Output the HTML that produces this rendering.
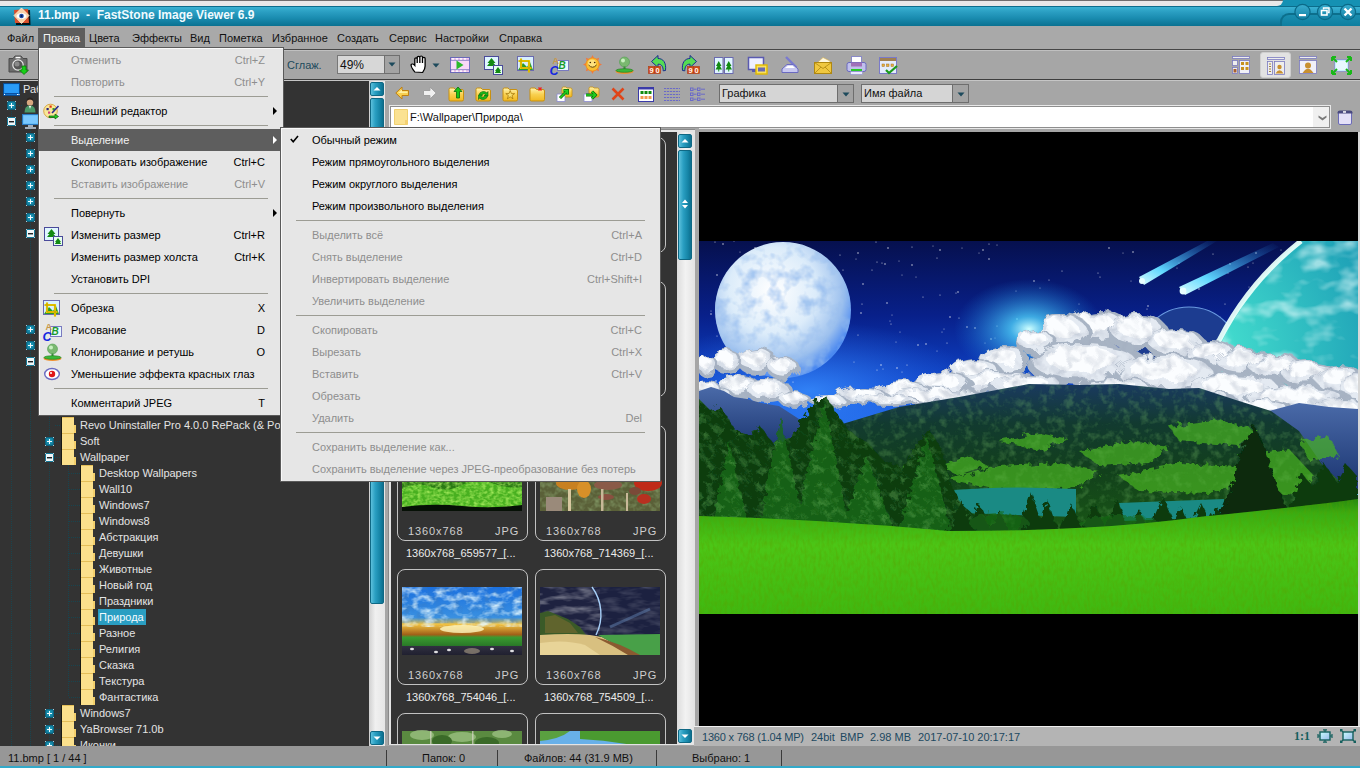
<!DOCTYPE html>
<html><head><meta charset="utf-8">
<style>
*{box-sizing:border-box}
html,body{margin:0;padding:0}
body{width:1360px;height:768px;position:relative;overflow:hidden;background:#a5a5a5;font-family:"Liberation Sans",sans-serif;font-size:11px;color:#000}
.a{position:absolute}
.t{position:absolute;white-space:nowrap;line-height:13px}
svg{position:absolute;overflow:visible}
.tr{position:absolute;color:#e2e2e2;white-space:nowrap;line-height:13px}
.dis{color:#8f8f8f}

</style></head>
<body>
<div class="a" style="left:0px;top:0px;width:1360px;height:7px;background:#1591b3"></div>
<div class="a" style="left:0px;top:0px;width:1283px;height:6px;background:#e8e8e8;border-top:1px solid #6e6e6e;border-bottom-right-radius:7px"></div>
<div class="a" style="left:0px;top:6px;width:1360px;height:20px;background:linear-gradient(#0b6d8c 0,#0b6d8c 1px,#3ab2d2 1px,#2a9ec2 30%,#1a8cb0 60%,#0a7191)"></div>
<div class="a" style="left:1280px;top:13px;width:100px;height:16px;border-radius:9px 0 0 0;background:linear-gradient(#1a8eb0,#0b7a9a);border-top:2px solid #0c6f8c;border-left:2px solid #0c6f8c"></div>
<svg style="left:13px;top:8px" width="17" height="16" viewBox="0 0 17 16">
<path d="M3 3 L17 2 L17.5 17 L3 17Z" fill="#000" opacity=".85"/>
<path d="M1 2 L15 1 L16 15 L2 15Z" fill="#d8502c"/>
<path d="M8.5 0 L16 7.5 L8.5 15.5 L1 7.5Z" fill="#f6d2a8" stroke="#fff2d8" stroke-width=".8"/>
<ellipse cx="8.5" cy="8" rx="5" ry="3" fill="#fff"/>
<circle cx="8.5" cy="8" r="2.3" fill="#1a4aa8"/>
<circle cx="8.5" cy="8" r="1" fill="#061a50"/>
</svg>
<div class="t" style="left:38px;top:7px;font-weight:bold;font-size:12px;line-height:16px;color:#f0fbff">11.bmp&nbsp;&nbsp;-&nbsp;&nbsp;FastStone Image Viewer 6.9</div>
<svg style="left:1290px;top:0px" width="70" height="22" viewBox="0 0 70 22"><defs><linearGradient id="wbg" x1="0" y1="0" x2="0" y2="1"><stop offset="0" stop-color="#3aaed0"/><stop offset="1" stop-color="#137fa2"/></linearGradient></defs><circle cx="12.5" cy="12" r="7.6" fill="url(#wbg)" stroke="#0b6a88" stroke-width="1.2"/><rect x="9" y="14" width="7" height="2.2" fill="#fff"/><circle cx="35" cy="12" r="7.6" fill="url(#wbg)" stroke="#0b6a88" stroke-width="1.2"/><rect x="31.5" y="10.5" width="5.5" height="4.5" fill="none" stroke="#fff" stroke-width="1.6"/><path d="M33.5 9.5 V8 H39 V12.5 H38" fill="none" stroke="#fff" stroke-width="1.4"/><circle cx="58" cy="12" r="7.6" fill="url(#wbg)" stroke="#0b6a88" stroke-width="1.2"/><path d="M54.5 8.5 L61.5 15.5 M61.5 8.5 L54.5 15.5" stroke="#fff" stroke-width="2.4"/></svg>
<div class="a" style="left:0px;top:26px;width:1360px;height:23px;background:#a9a9a9"></div>
<div class="a" style="left:38px;top:28px;width:47px;height:20px;background:#5d5d5d"></div>
<div class="t" style="left:7px;top:32px;color:#111">Файл</div>
<div class="t" style="left:43px;top:32px;color:#f4f4f4">Правка</div>
<div class="t" style="left:89px;top:32px;color:#111">Цвета</div>
<div class="t" style="left:132px;top:32px;color:#111">Эффекты</div>
<div class="t" style="left:190px;top:32px;color:#111">Вид</div>
<div class="t" style="left:219px;top:32px;color:#111">Пометка</div>
<div class="t" style="left:272px;top:32px;color:#111">Избранное</div>
<div class="t" style="left:337px;top:32px;color:#111">Создать</div>
<div class="t" style="left:389px;top:32px;color:#111">Сервис</div>
<div class="t" style="left:435px;top:32px;color:#111">Настройки</div>
<div class="t" style="left:499px;top:32px;color:#111">Справка</div>
<div class="a" style="left:0px;top:49px;width:1360px;height:1px;background:#464646"></div>
<div class="a" style="left:0px;top:50px;width:1360px;height:1px;background:#c0c0c0"></div>
<div class="a" style="left:0px;top:51px;width:1360px;height:28px;background:#a6a6a6"></div>
<div class="a" style="left:0px;top:79px;width:1360px;height:1px;background:#3e3e3e"></div>
<div class="a" style="left:0px;top:80px;width:1360px;height:1px;background:#c6c6c6"></div>
<svg style="left:8px;top:55px" width="22" height="20" viewBox="0 0 22 20">
<path d="M1 3.5 H5 L7 1 H13 L15 3.5 H19 V17 H1Z" fill="#6b6b6b" stroke="#4a4a4a" stroke-width="1"/>
<rect x="7.5" y="1.8" width="5" height="1.5" fill="#fff"/>
<circle cx="10" cy="10" r="5.2" fill="#555" stroke="#e8e8e8" stroke-width="1.2"/>
<circle cx="9" cy="9" r="2.5" fill="#8a8a8a"/>
<path d="M14 11 H18 V15 H20.5 L16 19.5 L11.5 15 H14Z" fill="#16d016" stroke="#0a7a0a" stroke-width=".8"/>
</svg>
<div class="t" style="left:287px;top:59px;color:#1d4a5c">Сглаж.</div>
<div class="a" style="left:337px;top:55px;width:48px;height:19px;background:#d7d7d7;border:1px solid #777;border-right:none"></div>
<div class="a" style="left:384px;top:55px;width:16px;height:19px;background:#a3a3a3;border:1px solid #6f6f6f"></div>
<svg style="left:388px;top:62px" width="8" height="5" viewBox="0 0 8 5"><path d="M0.5 0.5 H7.5 L4 4.5Z" fill="#1d4a5c"/></svg>
<div class="t" style="left:340px;top:59px;color:#111;font-size:12px">49%</div>
<svg style="left:410px;top:55px" width="18" height="19" viewBox="0 0 18 19">
<path transform="scale(1.2,1)" d="M4 17 C2 14 0.5 11 1 9.5 C1.5 8.5 3 9 4 10.5 V4 C4 2.5 6 2.5 6 4 V8 V2.5 C6 1 8.2 1 8.2 2.5 V8 V2 C8.2 0.6 10.4 0.6 10.4 2 V8 V3.5 C10.4 2 12.6 2 12.6 3.5 V11 C12.6 14 11.5 16 10.5 17.5Z" fill="#fff" stroke="#000" stroke-width="1.1"/>
</svg>
<svg style="left:432px;top:63px" width="8" height="5" viewBox="0 0 8 5"><path d="M0.5 0.5 H7.5 L4 4.5Z" fill="#1d4a5c"/></svg>
<svg style="left:450px;top:57px" width="20" height="16" viewBox="0 0 20 16">
<rect x="0.5" y="0.5" width="19" height="15" fill="#f2c8f0" stroke="#6a6ab8"/>
<rect x="0.5" y="3.2" width="19" height="9.6" fill="#f8d8f8" stroke="#6a6ab8" stroke-width=".8"/>
<g fill="#fff"><rect x="2" y="1.2" width="2" height="1.4"/><rect x="6" y="1.2" width="2" height="1.4"/><rect x="10" y="1.2" width="2" height="1.4"/><rect x="14" y="1.2" width="2" height="1.4"/>
<rect x="2" y="13.4" width="2" height="1.4"/><rect x="6" y="13.4" width="2" height="1.4"/><rect x="10" y="13.4" width="2" height="1.4"/><rect x="14" y="13.4" width="2" height="1.4"/></g>
<path d="M6.5 3.5 L13.5 8 L6.5 12.5Z" fill="#2cb82c"/>
</svg>
<svg style="left:484px;top:56px" width="19" height="19" viewBox="0 0 19 19">
<rect x="0.5" y="0.5" width="14" height="13" fill="#e0f6ff" stroke="#4a4a9a"/>
<path d="M7.5 2 L11.5 7 H9.5 L12 10 H3 L5.5 7 H3.5Z" fill="#128a12"/>
<rect x="9.5" y="9.5" width="9" height="9" fill="#e8fff0" stroke="#4a4a9a"/>
<path d="M14 11 L17 15 H15.8 L17.2 17 H10.8 L12.2 15 H11Z" fill="#128a12"/>
</svg>
<svg style="left:517px;top:56px" width="19" height="19" viewBox="0 0 19 19">
<rect x="0.5" y="0.5" width="16" height="14" fill="#d8f0ff" stroke="#6a6ab0"/>
<path d="M1 14 L6 7 L10 11 L13 6 L16 14Z" fill="#2a9a2a"/>
<path d="M4 2.5 V12 H14.5 M1.5 5 H12 V16.5" fill="none" stroke="#f0d000" stroke-width="2.2"/>
<path d="M4 2.5 V12 H14.5 M1.5 5 H12 V16.5" fill="none" stroke="#a08000" stroke-width=".5"/>
</svg>
<svg style="left:550px;top:56px" width="19" height="19" viewBox="0 0 19 19">
<rect x="7.5" y="4.5" width="11" height="10" fill="#e8f8ff" stroke="#7a7ac0"/>
<text x="8.6" y="13.2" font-family="Liberation Sans" font-weight="bold" font-style="italic" font-size="10" fill="#1a9a2a">B</text>
<text x="2.5" y="8" font-family="Liberation Sans" font-weight="bold" font-size="9" fill="#c89848">A</text>
<text x="-0.5" y="18.5" font-family="Liberation Sans" font-weight="bold" font-style="italic" font-size="12.5" fill="#1428e0">C</text>
</svg>
<svg style="left:583px;top:55px" width="19" height="19" viewBox="0 0 19 19">
<g fill="#f07840"><path d="M9.5 0 L11.5 4 L7.5 4Z"/><path d="M9.5 19 L11.5 15 L7.5 15Z"/><path d="M0 9.5 L4 7.5 L4 11.5Z"/><path d="M19 9.5 L15 7.5 L15 11.5Z"/>
<path d="M2.8 2.8 L7 4.2 L4.2 7Z"/><path d="M16.2 2.8 L12 4.2 L14.8 7Z"/><path d="M2.8 16.2 L7 14.8 L4.2 12Z"/><path d="M16.2 16.2 L12 14.8 L14.8 12Z"/></g>
<circle cx="9.5" cy="9.5" r="6.6" fill="#f8c030" stroke="#f09020" stroke-width="1"/>
<circle cx="9" cy="8.5" r="4" fill="#fff0a0" opacity=".7"/>
<circle cx="7.3" cy="7.5" r=".8" fill="#402000"/><circle cx="11.7" cy="7.5" r=".8" fill="#402000"/>
<path d="M5.5 10 Q9.5 14.5 13.5 10" fill="none" stroke="#604000" stroke-width="1"/>
</svg>
<svg style="left:615px;top:56px" width="19" height="19" viewBox="0 0 19 19">
<circle cx="9.5" cy="6" r="5" fill="#7ab870" stroke="#50a050" stroke-width=".6"/>
<circle cx="8" cy="4.5" r="2" fill="#c8f0c0"/>
<rect x="8.5" y="10.5" width="2" height="3" fill="#3a8a3a"/>
<ellipse cx="9.5" cy="15.5" rx="9" ry="2.4" fill="#f09030"/>
<ellipse cx="9.5" cy="14.5" rx="8.5" ry="1.8" fill="#3ab83a" stroke="#1a7a1a" stroke-width=".6"/>
</svg>
<svg style="left:648px;top:55px" width="20" height="20" viewBox="0 0 20 20"><path d="M3.5 6.5 L10 0.5 V3.5 C15 3.5 18.5 7.5 17.5 15.5 L15.2 15.8 C15.2 11.5 13.5 9 10 9.2 V12.5Z" fill="#54dc54" stroke="#1a2a90" stroke-width="1"/><rect x="0.5" y="11.5" width="6" height="7" fill="#d04a18" stroke="#b03a10" stroke-width=".6"/><rect x="6.5" y="11.5" width="6" height="7" fill="#d04a18" stroke="#b03a10" stroke-width=".6"/><text x="1.5" y="17.8" font-family="Liberation Sans" font-weight="bold" font-size="7.5" fill="#fff8f0">9</text><text x="7.5" y="17.8" font-family="Liberation Sans" font-weight="bold" font-size="7.5" fill="#fff8f0">0</text></svg>
<svg style="left:680px;top:55px" width="20" height="20" viewBox="0 0 20 20"><g transform="translate(20,0) scale(-1,1)"><path d="M3.5 6.5 L10 0.5 V3.5 C15 3.5 18.5 7.5 17.5 15.5 L15.2 15.8 C15.2 11.5 13.5 9 10 9.2 V12.5Z" fill="#54dc54" stroke="#1a2a90" stroke-width="1"/></g><rect x="7.5" y="11.5" width="6" height="7" fill="#d04a18" stroke="#b03a10" stroke-width=".6"/><rect x="13.5" y="11.5" width="6" height="7" fill="#d04a18" stroke="#b03a10" stroke-width=".6"/><text x="8.5" y="17.8" font-family="Liberation Sans" font-weight="bold" font-size="7.5" fill="#fff8f0">9</text><text x="14.5" y="17.8" font-family="Liberation Sans" font-weight="bold" font-size="7.5" fill="#fff8f0">0</text></svg>
<svg style="left:714px;top:57px" width="20" height="17" viewBox="0 0 20 17">
<rect x="0.5" y="0.5" width="8.5" height="16" fill="#e0f4ff" stroke="#6a6ab0"/>
<rect x="10.5" y="0.5" width="8.5" height="16" fill="#e0f4ff" stroke="#6a6ab0"/>
<path d="M4.75 4 L7.5 9 H6 L8 12.5 H1.5 L3.5 9 H2Z M4.3 12 H5.2 V14.5 H4.3Z" fill="#128a12"/>
<path d="M14.75 4 L17.5 9 H16 L18 12.5 H11.5 L13.5 9 H12Z M14.3 12 H15.2 V14.5 H14.3Z" fill="#128a12"/>
</svg>
<svg style="left:748px;top:57px" width="20" height="18" viewBox="0 0 20 18">
<rect x="0.5" y="0.5" width="15" height="12" fill="#eef0ff" stroke="#5a5ab0" stroke-width="1.5"/>
<rect x="4" y="13" width="8" height="2" fill="#5a5ab0"/>
<rect x="8" y="8" width="11" height="9" fill="#f8e060" stroke="#e0b800" stroke-width="1.4"/>
<rect x="10" y="10.5" width="7" height="4" fill="#6a6ab0"/>
</svg>
<svg style="left:781px;top:56px" width="19" height="19" viewBox="0 0 19 19">
<path d="M5 1 L15.5 11.5" stroke="#7a7ad0" stroke-width="2.4"/>
<path d="M1 13 L6 8.5 H12 L17 13 V16.5 H1Z" fill="#c8c8f0" stroke="#6a6ac0"/>
<path d="M4 12 L7 9.8 H11.5 L14 12Z" fill="#fff"/>
</svg>
<svg style="left:814px;top:56px" width="19" height="19" viewBox="0 0 19 19">
<path d="M3 7 L9 1.5 L16 5 L16 9Z" fill="#fff8e0" stroke="#d8b040" stroke-width=".6"/>
<rect x="0.5" y="6.5" width="17" height="11" fill="#f0c840" stroke="#b08810"/>
<path d="M0.5 6.5 L9 12.5 L17.5 6.5 M0.5 17.5 L7 11 M17.5 17.5 L11 11" fill="none" stroke="#b08810" stroke-width=".8"/>
</svg>
<svg style="left:846px;top:56px" width="21" height="19" viewBox="0 0 21 19">
<rect x="5.5" y="0.5" width="10" height="6" fill="#fff" stroke="#8a8ac8"/>
<rect x="1" y="6.5" width="19" height="9" rx="2" fill="#c0c0ec" stroke="#6a6ac0"/>
<rect x="5" y="6.5" width="11" height="4" fill="#a070b8"/>
<rect x="5" y="13" width="11" height="2" fill="#28c828"/>
<rect x="4.5" y="15.5" width="12" height="3" fill="#e8e8ff" stroke="#8a8ac8" stroke-width=".6"/>
</svg>
<svg style="left:879px;top:57px" width="19" height="18" viewBox="0 0 19 18">
<rect x="0.5" y="0.5" width="17" height="16" fill="#e4ecfc" stroke="#7a7ac8"/>
<rect x="1" y="1" width="16" height="3" fill="#a08050"/>
<rect x="3" y="7" width="2.5" height="2.5" fill="#e8b040" stroke="#a07020" stroke-width=".5"/>
<rect x="7.5" y="7" width="2.5" height="2.5" fill="#e8b040" stroke="#a07020" stroke-width=".5"/>
<rect x="12" y="7" width="2.5" height="2.5" fill="#e8b040" stroke="#a07020" stroke-width=".5"/>
<path d="M7 13 L10 16 L18 9" fill="none" stroke="#1a9a1a" stroke-width="2.2"/>
</svg>
<svg style="left:1232px;top:56px" width="19" height="19" viewBox="0 0 19 19">
<rect x="0.5" y="0.5" width="17" height="2" fill="#eee" stroke="#7a7ac0" stroke-width=".8"/>
<rect x="0.5" y="4.5" width="5" height="5" fill="#eee" stroke="#7a7ac0" stroke-width=".8"/>
<rect x="0.5" y="11.5" width="5" height="6" fill="#eee" stroke="#7a7ac0" stroke-width=".8"/>
<rect x="1.5" y="13" width="3" height="3.5" fill="#a86030"/>
<rect x="7.5" y="4.5" width="10" height="13" fill="#f0f0f8" stroke="#7a7ac0" stroke-width=".8"/>
<rect x="9" y="6" width="3" height="3" fill="#c89020"/><rect x="13.5" y="6" width="3" height="3" fill="#c89020"/>
<rect x="9" y="11" width="3" height="3" fill="#c89020"/><rect x="13.5" y="11" width="3" height="3" fill="#c89020"/>
</svg>
<div class="a" style="left:1260px;top:52px;width:31px;height:26px;background:#e2e2e2;border-radius:3px;border:1px solid #cfcfcf"></div>
<svg style="left:1267px;top:57px" width="19" height="18" viewBox="0 0 19 18">
<rect x="0.5" y="0.5" width="17" height="2" fill="#eee" stroke="#7a7ac0" stroke-width=".8"/>
<rect x="0.5" y="4.5" width="5" height="13" fill="#eee" stroke="#7a7ac0" stroke-width=".8"/>
<path d="M2 7 H4 M2 9.5 H4 M2 12 H4 M2 14.5 H4" stroke="#a08040" stroke-width="1"/>
<rect x="7.5" y="4.5" width="10" height="13" fill="#eee" stroke="#7a7ac0" stroke-width=".8"/>
<circle cx="12.5" cy="10" r="2.2" fill="#c89030"/><path d="M8.5 16.5 Q12.5 10 16.5 16.5Z" fill="#c89030"/>
</svg>
<svg style="left:1299px;top:56px" width="19" height="19" viewBox="0 0 19 19">
<rect x="0.5" y="0.5" width="17" height="2" fill="#eee" stroke="#7a7ac0" stroke-width=".8"/>
<rect x="0.5" y="4.5" width="17" height="13" fill="#f0f0f8" stroke="#7a7ac0" stroke-width=".8"/>
<circle cx="9" cy="9.5" r="3" fill="#c89030"/><path d="M3.5 17 Q9 8.5 14.5 17Z" fill="#c89030"/>
</svg>
<svg style="left:1331px;top:56px" width="21" height="19" viewBox="0 0 21 19">
<rect x="3.5" y="3.5" width="14" height="12" fill="#c8ecff" stroke="#7a7ac0" stroke-width=".6"/>
<rect x="5" y="5" width="11" height="9" fill="#e8f8ff"/>
<path d="M1 1 L6 6 M1 1 H5 M1 1 V5 M20 1 L15 6 M20 1 H16 M20 1 V5 M1 18 L6 13 M1 18 H5 M1 18 V14 M20 18 L15 13 M20 18 H16 M20 18 V14" stroke="#18b818" stroke-width="2"/>
</svg>
<div class="a" style="left:0px;top:81px;width:369px;height:665px;background:#333333"></div>
<div class="a" style="left:0;top:81px;width:369px;height:665px;overflow:hidden"><div class="a" style="left:0;top:-81px;width:369px;height:768px"><div class="a" style="left:11px;top:97px;width:1px;height:649px;background:repeating-linear-gradient(180deg,#174550 0 1px,transparent 1px 2px)"></div>
<div class="a" style="left:30px;top:129px;width:1px;height:617px;background:repeating-linear-gradient(180deg,#174550 0 1px,transparent 1px 2px)"></div>
<div class="a" style="left:49px;top:377px;width:1px;height:369px;background:repeating-linear-gradient(180deg,#174550 0 1px,transparent 1px 2px)"></div>
<div class="a" style="left:68px;top:465px;width:1px;height:232px;background:repeating-linear-gradient(180deg,#174550 0 1px,transparent 1px 2px)"></div>
<div class="a" style="left:17px;top:105px;width:6px;height:1px;background:repeating-linear-gradient(90deg,#174550 0 1px,transparent 1px 2px)"></div>
<div class="a" style="left:17px;top:121px;width:5px;height:1px;background:repeating-linear-gradient(90deg,#174550 0 1px,transparent 1px 2px)"></div>
<svg style="left:3px;top:83px" width="17" height="13" viewBox="0 0 17 13"><rect x="0.5" y="0.5" width="16" height="12" fill="#1e92f0" stroke="#0a4a90"/><rect x="1.5" y="1.5" width="14" height="9" fill="#2a9cf8"/><rect x="1.5" y="10" width="14" height="1.5" fill="#0a50a0"/><g fill="#fff"><rect x="1" y="11" width="1" height="1"/><rect x="14" y="11" width="1" height="1"/><rect x="15.5" y="11" width="1" height="1"/></g></svg>
<div class="tr" style="left:23px;top:83px;color:#e8e8e8">Рабочий стол</div>
<div class="a" style="left:7px;top:101px;width:9px;height:9px;background:radial-gradient(circle at 50% 45%,#22a6c6,#0e7594 70%,#0a5f7a);border-radius:1px;box-shadow:inset 0 0 0 .5px #0a4a60"></div>
<div class="a" style="left:9px;top:105px;width:5px;height:1px;background:#f0fbff"></div>
<div class="a" style="left:11px;top:103px;width:1px;height:5px;background:#f0fbff"></div>
<div class="a" style="left:7px;top:101px;width:1px;height:1px;background:#b8c8d0"></div>
<div class="a" style="left:15px;top:101px;width:1px;height:1px;background:#b8c8d0"></div>
<div class="a" style="left:7px;top:109px;width:1px;height:1px;background:#b8c8d0"></div>
<div class="a" style="left:15px;top:109px;width:1px;height:1px;background:#b8c8d0"></div>
<svg style="left:24px;top:97px" width="12" height="16" viewBox="0 0 12 16"><circle cx="6" cy="5.5" r="3.2" fill="#d8a880"/><path d="M2.6 4.5 Q2.5 0.5 6 0.5 Q9.5 0.5 9.4 4.5 Q8.5 2.5 6 2.6 Q3.5 2.5 2.6 4.5Z" fill="#2a2420"/><path d="M0.5 15.5 Q0.5 8.5 6 8.5 Q11.5 8.5 11.5 15.5Z" fill="#4a9a6a"/><path d="M5 9 L6 12 L7 9Z" fill="#fff"/></svg>
<div class="a" style="left:7px;top:117px;width:9px;height:9px;background:#f2f6f8;border:1px solid #157a98;border-radius:1px"></div>
<div class="a" style="left:9px;top:121px;width:5px;height:1px;background:#222"></div>
<div class="a" style="left:9px;top:122px;width:5px;height:1px;background:#8a9aa0"></div>
<div class="a" style="left:7px;top:117px;width:1px;height:1px;background:#b8c8d0"></div>
<div class="a" style="left:15px;top:117px;width:1px;height:1px;background:#b8c8d0"></div>
<div class="a" style="left:7px;top:125px;width:1px;height:1px;background:#b8c8d0"></div>
<div class="a" style="left:15px;top:125px;width:1px;height:1px;background:#b8c8d0"></div>
<svg style="left:22px;top:114px" width="17" height="15" viewBox="0 0 17 15"><rect x="0.5" y="0.5" width="16" height="10" fill="#58b8f0" stroke="#2a78c0"/><rect x="1.5" y="1.5" width="14" height="8" fill="#7ac8ff"/><path d="M6 12 H11 M3 14 H14" stroke="#c8d8e8" stroke-width="1.4"/></svg>
<div class="a" style="left:26px;top:133px;width:9px;height:9px;background:radial-gradient(circle at 50% 45%,#22a6c6,#0e7594 70%,#0a5f7a);border-radius:1px;box-shadow:inset 0 0 0 .5px #0a4a60"></div>
<div class="a" style="left:28px;top:137px;width:5px;height:1px;background:#f0fbff"></div>
<div class="a" style="left:30px;top:135px;width:1px;height:5px;background:#f0fbff"></div>
<div class="a" style="left:26px;top:133px;width:1px;height:1px;background:#b8c8d0"></div>
<div class="a" style="left:34px;top:133px;width:1px;height:1px;background:#b8c8d0"></div>
<div class="a" style="left:26px;top:141px;width:1px;height:1px;background:#b8c8d0"></div>
<div class="a" style="left:34px;top:141px;width:1px;height:1px;background:#b8c8d0"></div>
<div class="a" style="left:26px;top:149px;width:9px;height:9px;background:radial-gradient(circle at 50% 45%,#22a6c6,#0e7594 70%,#0a5f7a);border-radius:1px;box-shadow:inset 0 0 0 .5px #0a4a60"></div>
<div class="a" style="left:28px;top:153px;width:5px;height:1px;background:#f0fbff"></div>
<div class="a" style="left:30px;top:151px;width:1px;height:5px;background:#f0fbff"></div>
<div class="a" style="left:26px;top:149px;width:1px;height:1px;background:#b8c8d0"></div>
<div class="a" style="left:34px;top:149px;width:1px;height:1px;background:#b8c8d0"></div>
<div class="a" style="left:26px;top:157px;width:1px;height:1px;background:#b8c8d0"></div>
<div class="a" style="left:34px;top:157px;width:1px;height:1px;background:#b8c8d0"></div>
<div class="a" style="left:26px;top:165px;width:9px;height:9px;background:radial-gradient(circle at 50% 45%,#22a6c6,#0e7594 70%,#0a5f7a);border-radius:1px;box-shadow:inset 0 0 0 .5px #0a4a60"></div>
<div class="a" style="left:28px;top:169px;width:5px;height:1px;background:#f0fbff"></div>
<div class="a" style="left:30px;top:167px;width:1px;height:5px;background:#f0fbff"></div>
<div class="a" style="left:26px;top:165px;width:1px;height:1px;background:#b8c8d0"></div>
<div class="a" style="left:34px;top:165px;width:1px;height:1px;background:#b8c8d0"></div>
<div class="a" style="left:26px;top:173px;width:1px;height:1px;background:#b8c8d0"></div>
<div class="a" style="left:34px;top:173px;width:1px;height:1px;background:#b8c8d0"></div>
<div class="a" style="left:26px;top:181px;width:9px;height:9px;background:radial-gradient(circle at 50% 45%,#22a6c6,#0e7594 70%,#0a5f7a);border-radius:1px;box-shadow:inset 0 0 0 .5px #0a4a60"></div>
<div class="a" style="left:28px;top:185px;width:5px;height:1px;background:#f0fbff"></div>
<div class="a" style="left:30px;top:183px;width:1px;height:5px;background:#f0fbff"></div>
<div class="a" style="left:26px;top:181px;width:1px;height:1px;background:#b8c8d0"></div>
<div class="a" style="left:34px;top:181px;width:1px;height:1px;background:#b8c8d0"></div>
<div class="a" style="left:26px;top:189px;width:1px;height:1px;background:#b8c8d0"></div>
<div class="a" style="left:34px;top:189px;width:1px;height:1px;background:#b8c8d0"></div>
<div class="a" style="left:26px;top:197px;width:9px;height:9px;background:radial-gradient(circle at 50% 45%,#22a6c6,#0e7594 70%,#0a5f7a);border-radius:1px;box-shadow:inset 0 0 0 .5px #0a4a60"></div>
<div class="a" style="left:28px;top:201px;width:5px;height:1px;background:#f0fbff"></div>
<div class="a" style="left:30px;top:199px;width:1px;height:5px;background:#f0fbff"></div>
<div class="a" style="left:26px;top:197px;width:1px;height:1px;background:#b8c8d0"></div>
<div class="a" style="left:34px;top:197px;width:1px;height:1px;background:#b8c8d0"></div>
<div class="a" style="left:26px;top:205px;width:1px;height:1px;background:#b8c8d0"></div>
<div class="a" style="left:34px;top:205px;width:1px;height:1px;background:#b8c8d0"></div>
<div class="a" style="left:26px;top:213px;width:9px;height:9px;background:radial-gradient(circle at 50% 45%,#22a6c6,#0e7594 70%,#0a5f7a);border-radius:1px;box-shadow:inset 0 0 0 .5px #0a4a60"></div>
<div class="a" style="left:28px;top:217px;width:5px;height:1px;background:#f0fbff"></div>
<div class="a" style="left:30px;top:215px;width:1px;height:5px;background:#f0fbff"></div>
<div class="a" style="left:26px;top:213px;width:1px;height:1px;background:#b8c8d0"></div>
<div class="a" style="left:34px;top:213px;width:1px;height:1px;background:#b8c8d0"></div>
<div class="a" style="left:26px;top:221px;width:1px;height:1px;background:#b8c8d0"></div>
<div class="a" style="left:34px;top:221px;width:1px;height:1px;background:#b8c8d0"></div>
<div class="a" style="left:26px;top:229px;width:9px;height:9px;background:#f2f6f8;border:1px solid #157a98;border-radius:1px"></div>
<div class="a" style="left:28px;top:233px;width:5px;height:1px;background:#222"></div>
<div class="a" style="left:28px;top:234px;width:5px;height:1px;background:#8a9aa0"></div>
<div class="a" style="left:26px;top:229px;width:1px;height:1px;background:#b8c8d0"></div>
<div class="a" style="left:34px;top:229px;width:1px;height:1px;background:#b8c8d0"></div>
<div class="a" style="left:26px;top:237px;width:1px;height:1px;background:#b8c8d0"></div>
<div class="a" style="left:34px;top:237px;width:1px;height:1px;background:#b8c8d0"></div>
<div class="a" style="left:26px;top:325px;width:9px;height:9px;background:radial-gradient(circle at 50% 45%,#22a6c6,#0e7594 70%,#0a5f7a);border-radius:1px;box-shadow:inset 0 0 0 .5px #0a4a60"></div>
<div class="a" style="left:28px;top:329px;width:5px;height:1px;background:#f0fbff"></div>
<div class="a" style="left:30px;top:327px;width:1px;height:5px;background:#f0fbff"></div>
<div class="a" style="left:26px;top:325px;width:1px;height:1px;background:#b8c8d0"></div>
<div class="a" style="left:34px;top:325px;width:1px;height:1px;background:#b8c8d0"></div>
<div class="a" style="left:26px;top:333px;width:1px;height:1px;background:#b8c8d0"></div>
<div class="a" style="left:34px;top:333px;width:1px;height:1px;background:#b8c8d0"></div>
<div class="a" style="left:26px;top:341px;width:9px;height:9px;background:radial-gradient(circle at 50% 45%,#22a6c6,#0e7594 70%,#0a5f7a);border-radius:1px;box-shadow:inset 0 0 0 .5px #0a4a60"></div>
<div class="a" style="left:28px;top:345px;width:5px;height:1px;background:#f0fbff"></div>
<div class="a" style="left:30px;top:343px;width:1px;height:5px;background:#f0fbff"></div>
<div class="a" style="left:26px;top:341px;width:1px;height:1px;background:#b8c8d0"></div>
<div class="a" style="left:34px;top:341px;width:1px;height:1px;background:#b8c8d0"></div>
<div class="a" style="left:26px;top:349px;width:1px;height:1px;background:#b8c8d0"></div>
<div class="a" style="left:34px;top:349px;width:1px;height:1px;background:#b8c8d0"></div>
<div class="a" style="left:26px;top:357px;width:9px;height:9px;background:#f2f6f8;border:1px solid #157a98;border-radius:1px"></div>
<div class="a" style="left:28px;top:361px;width:5px;height:1px;background:#222"></div>
<div class="a" style="left:28px;top:362px;width:5px;height:1px;background:#8a9aa0"></div>
<div class="a" style="left:26px;top:357px;width:1px;height:1px;background:#b8c8d0"></div>
<div class="a" style="left:34px;top:357px;width:1px;height:1px;background:#b8c8d0"></div>
<div class="a" style="left:26px;top:365px;width:1px;height:1px;background:#b8c8d0"></div>
<div class="a" style="left:34px;top:365px;width:1px;height:1px;background:#b8c8d0"></div>
<div class="a" style="left:55px;top:425px;width:7px;height:1px;background:repeating-linear-gradient(90deg,#174550 0 1px,transparent 1px 2px)"></div>
<div class="a" style="left:61px;top:417px;width:1px;height:16px;background:#1a1a12"></div>
<div class="a" style="left:62px;top:417px;width:12px;height:16px;background:#fbe08c"></div>
<div class="a" style="left:62px;top:417px;width:12px;height:1px;background:#e4be58"></div>
<div class="a" style="left:74px;top:425px;width:2px;height:8px;background:#f4d06c"></div>
<div class="tr" style="left:80px;top:419px;color:#e4e4e4">Revo Uninstaller Pro 4.0.0 RePack (&amp; Portable)</div>
<div class="a" style="left:55px;top:441px;width:7px;height:1px;background:repeating-linear-gradient(90deg,#174550 0 1px,transparent 1px 2px)"></div>
<div class="a" style="left:45px;top:437px;width:9px;height:9px;background:radial-gradient(circle at 50% 45%,#22a6c6,#0e7594 70%,#0a5f7a);border-radius:1px;box-shadow:inset 0 0 0 .5px #0a4a60"></div>
<div class="a" style="left:47px;top:441px;width:5px;height:1px;background:#f0fbff"></div>
<div class="a" style="left:49px;top:439px;width:1px;height:5px;background:#f0fbff"></div>
<div class="a" style="left:45px;top:437px;width:1px;height:1px;background:#b8c8d0"></div>
<div class="a" style="left:53px;top:437px;width:1px;height:1px;background:#b8c8d0"></div>
<div class="a" style="left:45px;top:445px;width:1px;height:1px;background:#b8c8d0"></div>
<div class="a" style="left:53px;top:445px;width:1px;height:1px;background:#b8c8d0"></div>
<div class="a" style="left:61px;top:433px;width:1px;height:16px;background:#1a1a12"></div>
<div class="a" style="left:62px;top:433px;width:12px;height:16px;background:#fbe08c"></div>
<div class="a" style="left:62px;top:433px;width:12px;height:1px;background:#e4be58"></div>
<div class="a" style="left:74px;top:441px;width:2px;height:8px;background:#f4d06c"></div>
<div class="tr" style="left:80px;top:435px;color:#e4e4e4">Soft</div>
<div class="a" style="left:55px;top:457px;width:7px;height:1px;background:repeating-linear-gradient(90deg,#174550 0 1px,transparent 1px 2px)"></div>
<div class="a" style="left:45px;top:453px;width:9px;height:9px;background:#f2f6f8;border:1px solid #157a98;border-radius:1px"></div>
<div class="a" style="left:47px;top:457px;width:5px;height:1px;background:#222"></div>
<div class="a" style="left:47px;top:458px;width:5px;height:1px;background:#8a9aa0"></div>
<div class="a" style="left:45px;top:453px;width:1px;height:1px;background:#b8c8d0"></div>
<div class="a" style="left:53px;top:453px;width:1px;height:1px;background:#b8c8d0"></div>
<div class="a" style="left:45px;top:461px;width:1px;height:1px;background:#b8c8d0"></div>
<div class="a" style="left:53px;top:461px;width:1px;height:1px;background:#b8c8d0"></div>
<div class="a" style="left:61px;top:449px;width:1px;height:16px;background:#1a1a12"></div>
<div class="a" style="left:62px;top:449px;width:12px;height:16px;background:#fbe08c"></div>
<div class="a" style="left:62px;top:449px;width:12px;height:1px;background:#e4be58"></div>
<div class="a" style="left:74px;top:457px;width:2px;height:8px;background:#f4d06c"></div>
<div class="tr" style="left:80px;top:451px;color:#e4e4e4">Wallpaper</div>
<div class="a" style="left:55px;top:713px;width:7px;height:1px;background:repeating-linear-gradient(90deg,#174550 0 1px,transparent 1px 2px)"></div>
<div class="a" style="left:45px;top:709px;width:9px;height:9px;background:radial-gradient(circle at 50% 45%,#22a6c6,#0e7594 70%,#0a5f7a);border-radius:1px;box-shadow:inset 0 0 0 .5px #0a4a60"></div>
<div class="a" style="left:47px;top:713px;width:5px;height:1px;background:#f0fbff"></div>
<div class="a" style="left:49px;top:711px;width:1px;height:5px;background:#f0fbff"></div>
<div class="a" style="left:45px;top:709px;width:1px;height:1px;background:#b8c8d0"></div>
<div class="a" style="left:53px;top:709px;width:1px;height:1px;background:#b8c8d0"></div>
<div class="a" style="left:45px;top:717px;width:1px;height:1px;background:#b8c8d0"></div>
<div class="a" style="left:53px;top:717px;width:1px;height:1px;background:#b8c8d0"></div>
<div class="a" style="left:61px;top:705px;width:1px;height:16px;background:#1a1a12"></div>
<div class="a" style="left:62px;top:705px;width:12px;height:16px;background:#fbe08c"></div>
<div class="a" style="left:62px;top:705px;width:12px;height:1px;background:#e4be58"></div>
<div class="a" style="left:74px;top:713px;width:2px;height:8px;background:#f4d06c"></div>
<div class="tr" style="left:80px;top:707px;color:#e4e4e4">Windows7</div>
<div class="a" style="left:55px;top:729px;width:7px;height:1px;background:repeating-linear-gradient(90deg,#174550 0 1px,transparent 1px 2px)"></div>
<div class="a" style="left:45px;top:725px;width:9px;height:9px;background:radial-gradient(circle at 50% 45%,#22a6c6,#0e7594 70%,#0a5f7a);border-radius:1px;box-shadow:inset 0 0 0 .5px #0a4a60"></div>
<div class="a" style="left:47px;top:729px;width:5px;height:1px;background:#f0fbff"></div>
<div class="a" style="left:49px;top:727px;width:1px;height:5px;background:#f0fbff"></div>
<div class="a" style="left:45px;top:725px;width:1px;height:1px;background:#b8c8d0"></div>
<div class="a" style="left:53px;top:725px;width:1px;height:1px;background:#b8c8d0"></div>
<div class="a" style="left:45px;top:733px;width:1px;height:1px;background:#b8c8d0"></div>
<div class="a" style="left:53px;top:733px;width:1px;height:1px;background:#b8c8d0"></div>
<div class="a" style="left:61px;top:721px;width:1px;height:16px;background:#1a1a12"></div>
<div class="a" style="left:62px;top:721px;width:12px;height:16px;background:#fbe08c"></div>
<div class="a" style="left:62px;top:721px;width:12px;height:1px;background:#e4be58"></div>
<div class="a" style="left:74px;top:729px;width:2px;height:8px;background:#f4d06c"></div>
<div class="tr" style="left:80px;top:723px;color:#e4e4e4">YaBrowser 71.0b</div>
<div class="a" style="left:55px;top:745px;width:7px;height:1px;background:repeating-linear-gradient(90deg,#174550 0 1px,transparent 1px 2px)"></div>
<div class="a" style="left:45px;top:741px;width:9px;height:9px;background:radial-gradient(circle at 50% 45%,#22a6c6,#0e7594 70%,#0a5f7a);border-radius:1px;box-shadow:inset 0 0 0 .5px #0a4a60"></div>
<div class="a" style="left:47px;top:745px;width:5px;height:1px;background:#f0fbff"></div>
<div class="a" style="left:49px;top:743px;width:1px;height:5px;background:#f0fbff"></div>
<div class="a" style="left:45px;top:741px;width:1px;height:1px;background:#b8c8d0"></div>
<div class="a" style="left:53px;top:741px;width:1px;height:1px;background:#b8c8d0"></div>
<div class="a" style="left:45px;top:749px;width:1px;height:1px;background:#b8c8d0"></div>
<div class="a" style="left:53px;top:749px;width:1px;height:1px;background:#b8c8d0"></div>
<div class="a" style="left:61px;top:737px;width:1px;height:16px;background:#1a1a12"></div>
<div class="a" style="left:62px;top:737px;width:12px;height:16px;background:#fbe08c"></div>
<div class="a" style="left:62px;top:737px;width:12px;height:1px;background:#e4be58"></div>
<div class="a" style="left:74px;top:745px;width:2px;height:8px;background:#f4d06c"></div>
<div class="tr" style="left:80px;top:739px;color:#e4e4e4">Иконки</div>
<div class="a" style="left:69px;top:473px;width:12px;height:1px;background:repeating-linear-gradient(90deg,#174550 0 1px,transparent 1px 2px)"></div>
<div class="a" style="left:80px;top:465px;width:1px;height:16px;background:#1a1a12"></div>
<div class="a" style="left:81px;top:465px;width:12px;height:16px;background:#fbe08c"></div>
<div class="a" style="left:81px;top:465px;width:12px;height:1px;background:#e4be58"></div>
<div class="a" style="left:93px;top:473px;width:2px;height:8px;background:#f4d06c"></div>
<div class="tr" style="left:99px;top:467px;color:#e4e4e4">Desktop Wallpapers</div>
<div class="a" style="left:69px;top:489px;width:12px;height:1px;background:repeating-linear-gradient(90deg,#174550 0 1px,transparent 1px 2px)"></div>
<div class="a" style="left:80px;top:481px;width:1px;height:16px;background:#1a1a12"></div>
<div class="a" style="left:81px;top:481px;width:12px;height:16px;background:#fbe08c"></div>
<div class="a" style="left:81px;top:481px;width:12px;height:1px;background:#e4be58"></div>
<div class="a" style="left:93px;top:489px;width:2px;height:8px;background:#f4d06c"></div>
<div class="tr" style="left:99px;top:483px;color:#e4e4e4">Wall10</div>
<div class="a" style="left:69px;top:505px;width:12px;height:1px;background:repeating-linear-gradient(90deg,#174550 0 1px,transparent 1px 2px)"></div>
<div class="a" style="left:80px;top:497px;width:1px;height:16px;background:#1a1a12"></div>
<div class="a" style="left:81px;top:497px;width:12px;height:16px;background:#fbe08c"></div>
<div class="a" style="left:81px;top:497px;width:12px;height:1px;background:#e4be58"></div>
<div class="a" style="left:93px;top:505px;width:2px;height:8px;background:#f4d06c"></div>
<div class="tr" style="left:99px;top:499px;color:#e4e4e4">Windows7</div>
<div class="a" style="left:69px;top:521px;width:12px;height:1px;background:repeating-linear-gradient(90deg,#174550 0 1px,transparent 1px 2px)"></div>
<div class="a" style="left:80px;top:513px;width:1px;height:16px;background:#1a1a12"></div>
<div class="a" style="left:81px;top:513px;width:12px;height:16px;background:#fbe08c"></div>
<div class="a" style="left:81px;top:513px;width:12px;height:1px;background:#e4be58"></div>
<div class="a" style="left:93px;top:521px;width:2px;height:8px;background:#f4d06c"></div>
<div class="tr" style="left:99px;top:515px;color:#e4e4e4">Windows8</div>
<div class="a" style="left:69px;top:537px;width:12px;height:1px;background:repeating-linear-gradient(90deg,#174550 0 1px,transparent 1px 2px)"></div>
<div class="a" style="left:80px;top:529px;width:1px;height:16px;background:#1a1a12"></div>
<div class="a" style="left:81px;top:529px;width:12px;height:16px;background:#fbe08c"></div>
<div class="a" style="left:81px;top:529px;width:12px;height:1px;background:#e4be58"></div>
<div class="a" style="left:93px;top:537px;width:2px;height:8px;background:#f4d06c"></div>
<div class="tr" style="left:99px;top:531px;color:#e4e4e4">Абстракция</div>
<div class="a" style="left:69px;top:553px;width:12px;height:1px;background:repeating-linear-gradient(90deg,#174550 0 1px,transparent 1px 2px)"></div>
<div class="a" style="left:80px;top:545px;width:1px;height:16px;background:#1a1a12"></div>
<div class="a" style="left:81px;top:545px;width:12px;height:16px;background:#fbe08c"></div>
<div class="a" style="left:81px;top:545px;width:12px;height:1px;background:#e4be58"></div>
<div class="a" style="left:93px;top:553px;width:2px;height:8px;background:#f4d06c"></div>
<div class="tr" style="left:99px;top:547px;color:#e4e4e4">Девушки</div>
<div class="a" style="left:69px;top:569px;width:12px;height:1px;background:repeating-linear-gradient(90deg,#174550 0 1px,transparent 1px 2px)"></div>
<div class="a" style="left:80px;top:561px;width:1px;height:16px;background:#1a1a12"></div>
<div class="a" style="left:81px;top:561px;width:12px;height:16px;background:#fbe08c"></div>
<div class="a" style="left:81px;top:561px;width:12px;height:1px;background:#e4be58"></div>
<div class="a" style="left:93px;top:569px;width:2px;height:8px;background:#f4d06c"></div>
<div class="tr" style="left:99px;top:563px;color:#e4e4e4">Животные</div>
<div class="a" style="left:69px;top:585px;width:12px;height:1px;background:repeating-linear-gradient(90deg,#174550 0 1px,transparent 1px 2px)"></div>
<div class="a" style="left:80px;top:577px;width:1px;height:16px;background:#1a1a12"></div>
<div class="a" style="left:81px;top:577px;width:12px;height:16px;background:#fbe08c"></div>
<div class="a" style="left:81px;top:577px;width:12px;height:1px;background:#e4be58"></div>
<div class="a" style="left:93px;top:585px;width:2px;height:8px;background:#f4d06c"></div>
<div class="tr" style="left:99px;top:579px;color:#e4e4e4">Новый год</div>
<div class="a" style="left:69px;top:601px;width:12px;height:1px;background:repeating-linear-gradient(90deg,#174550 0 1px,transparent 1px 2px)"></div>
<div class="a" style="left:80px;top:593px;width:1px;height:16px;background:#1a1a12"></div>
<div class="a" style="left:81px;top:593px;width:12px;height:16px;background:#fbe08c"></div>
<div class="a" style="left:81px;top:593px;width:12px;height:1px;background:#e4be58"></div>
<div class="a" style="left:93px;top:601px;width:2px;height:8px;background:#f4d06c"></div>
<div class="tr" style="left:99px;top:595px;color:#e4e4e4">Праздники</div>
<div class="a" style="left:69px;top:617px;width:12px;height:1px;background:repeating-linear-gradient(90deg,#174550 0 1px,transparent 1px 2px)"></div>
<div class="a" style="left:80px;top:609px;width:1px;height:16px;background:#1a1a12"></div>
<div class="a" style="left:81px;top:609px;width:12px;height:16px;background:#fbe08c"></div>
<div class="a" style="left:81px;top:609px;width:12px;height:1px;background:#e4be58"></div>
<div class="a" style="left:93px;top:617px;width:2px;height:8px;background:#f4d06c"></div>
<div class="a" style="left:98px;top:609px;width:48px;height:16px;background:#2a9ec2"></div>
<div class="tr" style="left:99px;top:611px;color:#f4fbff">Природа</div>
<div class="a" style="left:69px;top:633px;width:12px;height:1px;background:repeating-linear-gradient(90deg,#174550 0 1px,transparent 1px 2px)"></div>
<div class="a" style="left:80px;top:625px;width:1px;height:16px;background:#1a1a12"></div>
<div class="a" style="left:81px;top:625px;width:12px;height:16px;background:#fbe08c"></div>
<div class="a" style="left:81px;top:625px;width:12px;height:1px;background:#e4be58"></div>
<div class="a" style="left:93px;top:633px;width:2px;height:8px;background:#f4d06c"></div>
<div class="tr" style="left:99px;top:627px;color:#e4e4e4">Разное</div>
<div class="a" style="left:69px;top:649px;width:12px;height:1px;background:repeating-linear-gradient(90deg,#174550 0 1px,transparent 1px 2px)"></div>
<div class="a" style="left:80px;top:641px;width:1px;height:16px;background:#1a1a12"></div>
<div class="a" style="left:81px;top:641px;width:12px;height:16px;background:#fbe08c"></div>
<div class="a" style="left:81px;top:641px;width:12px;height:1px;background:#e4be58"></div>
<div class="a" style="left:93px;top:649px;width:2px;height:8px;background:#f4d06c"></div>
<div class="tr" style="left:99px;top:643px;color:#e4e4e4">Религия</div>
<div class="a" style="left:69px;top:665px;width:12px;height:1px;background:repeating-linear-gradient(90deg,#174550 0 1px,transparent 1px 2px)"></div>
<div class="a" style="left:80px;top:657px;width:1px;height:16px;background:#1a1a12"></div>
<div class="a" style="left:81px;top:657px;width:12px;height:16px;background:#fbe08c"></div>
<div class="a" style="left:81px;top:657px;width:12px;height:1px;background:#e4be58"></div>
<div class="a" style="left:93px;top:665px;width:2px;height:8px;background:#f4d06c"></div>
<div class="tr" style="left:99px;top:659px;color:#e4e4e4">Сказка</div>
<div class="a" style="left:69px;top:681px;width:12px;height:1px;background:repeating-linear-gradient(90deg,#174550 0 1px,transparent 1px 2px)"></div>
<div class="a" style="left:80px;top:673px;width:1px;height:16px;background:#1a1a12"></div>
<div class="a" style="left:81px;top:673px;width:12px;height:16px;background:#fbe08c"></div>
<div class="a" style="left:81px;top:673px;width:12px;height:1px;background:#e4be58"></div>
<div class="a" style="left:93px;top:681px;width:2px;height:8px;background:#f4d06c"></div>
<div class="tr" style="left:99px;top:675px;color:#e4e4e4">Текстура</div>
<div class="a" style="left:69px;top:697px;width:12px;height:1px;background:repeating-linear-gradient(90deg,#174550 0 1px,transparent 1px 2px)"></div>
<div class="a" style="left:80px;top:689px;width:1px;height:16px;background:#1a1a12"></div>
<div class="a" style="left:81px;top:689px;width:12px;height:16px;background:#fbe08c"></div>
<div class="a" style="left:81px;top:689px;width:12px;height:1px;background:#e4be58"></div>
<div class="a" style="left:93px;top:697px;width:2px;height:8px;background:#f4d06c"></div>
<div class="tr" style="left:99px;top:691px;color:#e4e4e4">Фантастика</div>
</div></div>
<div class="a" style="left:369px;top:81px;width:16px;height:665px;background:linear-gradient(90deg,#d0d0d0,#f0f0f0 40%,#e6e6e6)"></div>
<div class="a" style="left:370px;top:82px;width:14px;height:14px;border-radius:2px;background:linear-gradient(90deg,#5cc0dc,#2a9fc2 35%,#1584a6 75%,#0e6f8e);border:1px solid #0f6884"></div>
<svg style="left:370px;top:82px" width="14" height="14" viewBox="0 0 14 14"><path d="M3.5 8.5 L7.0 5.0 L10.5 8.5Z" fill="#fff"/></svg>
<div class="a" style="left:370px;top:98px;width:14px;height:506px;border-radius:2px;background:linear-gradient(90deg,#5cc0dc,#2a9fc2 35%,#1584a6 75%,#0e6f8e);border:1px solid #0f6884"></div>
<div class="a" style="left:370px;top:731px;width:14px;height:14px;border-radius:2px;background:linear-gradient(90deg,#5cc0dc,#2a9fc2 35%,#1584a6 75%,#0e6f8e);border:1px solid #0f6884"></div>
<svg style="left:370px;top:731px" width="14" height="14" viewBox="0 0 14 14"><path d="M3.5 5.5 L7.0 9.0 L10.5 5.5Z" fill="#fff"/></svg>
<div class="a" style="left:385px;top:81px;width:975px;height:49px;background:#a6a6a6"></div>
<svg style="left:395px;top:86px" width="15" height="14" viewBox="0 0 15 14"><path d="M0.8 7 L7 1 V4.5 H13.5 V9.5 H7 V13Z" fill="#f8d050" stroke="#c08010" stroke-width="1"/><path d="M3 7 L7 3.5 V5.5 H12.5 V7Z" fill="#fff0a0"/></svg>
<svg style="left:422px;top:86px" width="15" height="14" viewBox="0 0 15 14"><path d="M14.2 7 L8 1 V4.5 H1.5 V9.5 H8 V13Z" fill="#f0f0f0" stroke="#a0a0a0" stroke-width="1"/></svg>
<svg style="left:0px;top:0px" width="1" height="1" viewBox="0 0 1 1"><defs><linearGradient id="fg" x1="0" y1="0" x2="0" y2="1"><stop offset="0" stop-color="#fff4b0"/><stop offset=".5" stop-color="#f8d050"/><stop offset="1" stop-color="#f0b820"/></linearGradient></defs></svg>
<svg style="left:448px;top:86px" width="17" height="16" viewBox="0 0 17 16"><path d="M1 3.5 Q1 2 2.5 2 H6 L7.5 3.5 H14 Q15.5 3.5 15.5 5 V13.5 Q15.5 15 14 15 H2.5 Q1 15 1 13.5Z" fill="url(#fg)" stroke="#c89010" stroke-width="1"/><path d="M10 1 L14 5.5 H11.5 V12 H8.5 V5.5 H6Z" fill="#18c818" stroke="#0a6a0a" stroke-width=".8"/></svg>
<svg style="left:475px;top:86px" width="17" height="16" viewBox="0 0 17 16"><path d="M1 3.5 Q1 2 2.5 2 H6 L7.5 3.5 H14 Q15.5 3.5 15.5 5 V13.5 Q15.5 15 14 15 H2.5 Q1 15 1 13.5Z" fill="url(#fg)" stroke="#c89010" stroke-width="1"/><path d="M4 9 A4.5 4 0 0 1 12 7 L13 5.5 V10 H9 L10.5 8.5 A2.5 2.5 0 0 0 6.5 9.5Z" fill="#18b818" stroke="#0a6a0a" stroke-width=".6"/><path d="M12.5 10 A4.5 4 0 0 1 4.5 12 L3.5 13.5 V9 H7.5 L6 10.5 A2.5 2.5 0 0 0 10 9.5Z" fill="#18b818" stroke="#0a6a0a" stroke-width=".6"/></svg>
<svg style="left:502px;top:86px" width="17" height="16" viewBox="0 0 17 16"><path d="M1 3.5 Q1 2 2.5 2 H6 L7.5 3.5 H14 Q15.5 3.5 15.5 5 V13.5 Q15.5 15 14 15 H2.5 Q1 15 1 13.5Z" fill="url(#fg)" stroke="#c89010" stroke-width="1"/><path d="M8.2 4.5 L9.4 7.6 H12.6 L10 9.6 L11 12.8 L8.2 10.8 L5.4 12.8 L6.4 9.6 L3.8 7.6 H7Z" fill="#f8e070" stroke="#a07000" stroke-width=".7"/></svg>
<svg style="left:529px;top:86px" width="17" height="16" viewBox="0 0 17 16"><path d="M1 3.5 Q1 2 2.5 2 H6 L7.5 3.5 H14 Q15.5 3.5 15.5 5 V13.5 Q15.5 15 14 15 H2.5 Q1 15 1 13.5Z" fill="url(#fg)" stroke="#c89010" stroke-width="1"/><path d="M11 1 V5 M9 3 H13 M9.5 1.5 L12.5 4.5 M12.5 1.5 L9.5 4.5" stroke="#f02020" stroke-width="1"/></svg>
<svg style="left:556px;top:86px" width="17" height="16" viewBox="0 0 17 16">
<path d="M6 2.5 Q6 1 7.5 1 H10 L11 2 H14.5 Q16 2 16 3.5 V9.5 Q16 11 14.5 11 H7.5 Q6 11 6 9.5Z" fill="url(#fg)" stroke="#c89010" stroke-width=".8"/>
<path d="M1 8 H7 L9 10 V15.5 H1Z" fill="#fff" stroke="#8a8ad0" stroke-width=".8"/>
<path d="M4 12 L11 5 M7.5 4.5 H11.5 V8.5" fill="none" stroke="#0a6a0a" stroke-width="3"/><path d="M4 12 L11 5 M7.5 4.5 H11.5 V8.5" fill="none" stroke="#20d020" stroke-width="1.6"/></svg>
<svg style="left:583px;top:86px" width="17" height="16" viewBox="0 0 17 16">
<path d="M6 2.5 Q6 1 7.5 1 H10 L11 2 H14.5 Q16 2 16 3.5 V9.5 Q16 11 14.5 11 H7.5 Q6 11 6 9.5Z" fill="url(#fg)" stroke="#c89010" stroke-width=".8"/>
<path d="M1 8 H7 L9 10 V15.5 H1Z" fill="#fff" stroke="#8a8ad0" stroke-width=".8"/>
<path d="M3 9 H12 M9 5.5 L12.5 9 L9 12.5" fill="none" stroke="#0a6a0a" stroke-width="3"/><path d="M3 9 H12 M9 5.5 L12.5 9 L9 12.5" fill="none" stroke="#20d020" stroke-width="1.6"/></svg>
<svg style="left:611px;top:87px" width="14" height="14" viewBox="0 0 14 14"><path d="M1.5 1.5 L12.5 12.5 M12.5 1.5 L1.5 12.5" stroke="#e04418" stroke-width="2.6"/></svg>
<svg style="left:638px;top:87px" width="16" height="15" viewBox="0 0 16 15">
<rect x="0.5" y="0.5" width="15" height="14" fill="#fff" stroke="#3a3aa8" stroke-width="1"/>
<rect x="0.5" y="0.5" width="15" height="2" fill="#3a3aa8"/>
<rect x="2.5" y="4" width="3" height="3" fill="#108a10"/><rect x="6.5" y="4" width="3" height="3" fill="#108a10"/><rect x="10.5" y="4" width="3" height="3" fill="#108a10"/>
<rect x="2.5" y="9" width="3" height="3" fill="#f09850"/><rect x="6.5" y="9" width="3" height="3" fill="#f09850"/><rect x="10.5" y="9" width="3" height="3" fill="#f09850"/>
</svg>
<svg style="left:664px;top:87px" width="16" height="15" viewBox="0 0 16 15"><g stroke="#6a6ac8" stroke-width="1" stroke-dasharray="2.2 0.8"><path d="M0 1.5 H16 M0 4.5 H16 M0 7.5 H16 M0 10.5 H16 M0 13.5 H16"/></g></svg>
<svg style="left:690px;top:87px" width="16" height="15" viewBox="0 0 16 15"><g stroke="#6a6ac8" stroke-width="1" fill="none"><rect x="0.5" y="1" width="2.5" height="2.5"/><rect x="0.5" y="6" width="2.5" height="2.5"/><rect x="0.5" y="11" width="2.5" height="2.5"/><rect x="7.5" y="1" width="2.5" height="2.5"/><rect x="7.5" y="6" width="2.5" height="2.5"/><rect x="7.5" y="11" width="2.5" height="2.5"/><path d="M3.5 2.2 H6.5 M3.5 7.2 H6.5 M3.5 12.2 H6.5 M11 2.2 H15 M11 7.2 H15 M11 12.2 H15"/></g></svg>
<div class="a" style="left:719px;top:84px;width:118px;height:19px;background:#d5d5d5;border:1px solid #6e6e6e;border-right:none"></div>
<div class="a" style="left:837px;top:84px;width:17px;height:19px;background:#a3a3a3;border:1px solid #6e6e6e"></div>
<svg style="left:841.5px;top:92px" width="8" height="5" viewBox="0 0 8 5"><path d="M0.5 0.5 H7.5 L4 4.5Z" fill="#1d4a5c"/></svg>
<div class="t" style="left:722px;top:87px;color:#111;font-size:11px">Графика</div>
<div class="a" style="left:861px;top:84px;width:91px;height:19px;background:#d5d5d5;border:1px solid #6e6e6e;border-right:none"></div>
<div class="a" style="left:952px;top:84px;width:17px;height:19px;background:#a3a3a3;border:1px solid #6e6e6e"></div>
<svg style="left:956.5px;top:92px" width="8" height="5" viewBox="0 0 8 5"><path d="M0.5 0.5 H7.5 L4 4.5Z" fill="#1d4a5c"/></svg>
<div class="t" style="left:864px;top:87px;color:#111;font-size:11px">Имя файла</div>
<div class="a" style="left:389px;top:105px;width:942px;height:24px;background:#fff;border:1px solid #e8e8e8;box-shadow:inset 0 0 0 1px #8e8e8e"></div>
<svg style="left:394px;top:109px" width="14" height="16" viewBox="0 0 14 16"><path d="M0.5 0.5 H13.5 V15.5 H0.5Z" fill="#fbe292" stroke="#f0d070" stroke-width="1"/><path d="M11 11 V15.5 H13.5 V11Z" fill="#f4d070"/></svg>
<div class="t" style="left:410px;top:111px;color:#111;font-size:11px">F:\Wallpaper\Природа\</div>
<div class="a" style="left:1313px;top:107px;width:16px;height:20px;background:#f0f0f0"></div>
<svg style="left:1318px;top:115px" width="9" height="6" viewBox="0 0 9 6"><path d="M0.5 0.5 L4.5 3 L8.5 0.5 V2.5 L4.5 5.5 L0.5 2.5Z" fill="#7a7a7a"/></svg>
<svg style="left:1337px;top:110px" width="16" height="15" viewBox="0 0 16 15"><path d="M1.5 2.5 H14.5 V13 Q14.5 14.5 13 14.5 H3 Q1.5 14.5 1.5 13Z" fill="#e4e0f8" stroke="#6a6ab8" stroke-width="1"/><path d="M0.5 2.5 Q0.5 0.5 3 0.5 H13 Q15.5 0.5 15.5 2.5 V3.5 H0.5Z" fill="#4a4a80"/><rect x="6" y="1.2" width="3" height="1.5" fill="#fff"/></svg>
<div class="a" style="left:385px;top:128px;width:314px;height:618px;background:#a6a6a6"></div>
<div class="a" style="left:388px;top:129px;width:307px;height:616px;background:#e4e4e4;border-top:1px solid #8a8a8a;border-left:1px solid #8a8a8a"></div>
<div class="a" style="left:391px;top:132px;width:286px;height:612px;background:#333333"></div>
<div class="a" style="left:677px;top:132px;width:17px;height:612px;background:linear-gradient(90deg,#dcdcdc,#f2f2f2 50%,#e4e4e4)"></div>
<div class="a" style="left:391px;top:132px;width:286px;height:612px;overflow:hidden"><div class="a" style="left:-391px;top:-132px;width:1360px;height:768px"><div class="a" style="left:397px;top:137px;width:131px;height:116px;border:1px solid #c2c2c2;border-radius:8px"></div>
<div class="a" style="left:535px;top:137px;width:131px;height:116px;border:1px solid #c2c2c2;border-radius:8px"></div>
<div class="a" style="left:397px;top:281px;width:131px;height:116px;border:1px solid #c2c2c2;border-radius:8px"></div>
<div class="a" style="left:535px;top:281px;width:131px;height:116px;border:1px solid #c2c2c2;border-radius:8px"></div>
<div class="a" style="left:397px;top:425px;width:131px;height:116px;border:1px solid #c2c2c2;border-radius:8px"></div>
<svg style="left:402px;top:443px" width="120" height="68" viewBox="0 0 120 68"><defs><filter id="mt" x="0" y="0" width="100%" height="100%"><feTurbulence type="fractalNoise" baseFrequency="0.25 0.35" numOctaves="2" seed="4"/><feColorMatrix values="0 0 0 0 0.5  0 0 0 0 0.95  0 0 0 0 0.15  0 0 0 -2 1.3"/><feComposite in2="SourceGraphic" operator="in"/></filter></defs><rect width="120" height="68" fill="#2a7a14"/><rect width="120" height="30" fill="#1a4a10"/><path d="M0 46 Q15 38 30 44 T60 42 T90 40 T120 44 V66 H0Z" fill="#48b020"/><rect width="120" height="66" fill="#fff" filter="url(#mt)" opacity=".75"/><path d="M0 64 Q30 60 60 63 T120 62 V68 H0Z" fill="#061006"/></svg>
<div class="t" style="left:408px;top:525px;color:#cfcfcf;letter-spacing:0.9px;font-size:11px">1360x768</div>
<div class="t" style="left:495px;top:525px;color:#cfcfcf;letter-spacing:0.9px">JPG</div>
<div class="t" style="left:406px;top:547px;color:#ececec">1360x768_659577_[...</div>
<div class="a" style="left:535px;top:425px;width:131px;height:116px;border:1px solid #c2c2c2;border-radius:8px"></div>
<svg style="left:540px;top:443px" width="120" height="68" viewBox="0 0 120 68"><defs><filter id="mn" x="0" y="0" width="100%" height="100%"><feTurbulence type="fractalNoise" baseFrequency="0.2" numOctaves="2" seed="12"/><feColorMatrix values="0 0 0 0 0.3  0 0 0 0 0.45  0 0 0 0 0.2  0 0 0 -2 1.2"/><feComposite in2="SourceGraphic" operator="in"/></filter></defs><rect width="120" height="68" fill="#5a6038"/><rect width="120" height="68" fill="#fff" filter="url(#mn)" opacity=".6"/><ellipse cx="30" cy="40" rx="14" ry="7" fill="#c88020"/><ellipse cx="44" cy="46" rx="7" ry="9" fill="#d89028"/><ellipse cx="68" cy="42" rx="14" ry="5" fill="#8a5a48"/><ellipse cx="66" cy="54" rx="8" ry="3" fill="#8a5040"/><ellipse cx="108" cy="40" rx="14" ry="8" fill="#c02a18"/><ellipse cx="104" cy="56" rx="7" ry="5" fill="#b83020"/><ellipse cx="95" cy="48" rx="6" ry="4" fill="#7a4a38"/><rect x="28" y="46" width="3" height="22" fill="#d8c8a0"/><rect x="61" y="46" width="2.5" height="22" fill="#c8b898"/><rect x="86" y="50" width="2" height="18" fill="#c8b898"/><rect x="6" y="54" width="16" height="14" fill="#9a8a7a"/></svg>
<div class="t" style="left:546px;top:525px;color:#cfcfcf;letter-spacing:0.9px;font-size:11px">1360x768</div>
<div class="t" style="left:633px;top:525px;color:#cfcfcf;letter-spacing:0.9px">JPG</div>
<div class="t" style="left:544px;top:547px;color:#ececec">1360x768_714369_[...</div>
<div class="a" style="left:397px;top:569px;width:131px;height:116px;border:1px solid #c2c2c2;border-radius:8px"></div>
<svg style="left:402px;top:587px" width="120" height="68" viewBox="0 0 120 68"><defs><linearGradient id="ss" x1="0" y1="0" x2="0" y2="1"><stop offset="0" stop-color="#1a70e0"/><stop offset=".45" stop-color="#3a90e0"/><stop offset=".55" stop-color="#f0c040"/><stop offset=".7" stop-color="#a06018"/><stop offset=".74" stop-color="#3a9a30"/><stop offset=".86" stop-color="#2a7a28"/><stop offset=".87" stop-color="#303040"/><stop offset="1" stop-color="#202030"/></linearGradient><filter id="sn" x="0" y="0" width="100%" height="100%"><feTurbulence type="fractalNoise" baseFrequency="0.09 0.14" numOctaves="3" seed="14"/><feColorMatrix values="0 0 0 0 0.8  0 0 0 0 0.95  0 0 0 0 1  0 0 0 -2.4 1.35"/><feComposite in2="SourceGraphic" operator="in"/></filter><filter id="sd" x="0" y="0" width="100%" height="100%"><feTurbulence type="fractalNoise" baseFrequency="0.12" numOctaves="2" seed="3"/><feColorMatrix values="0 0 0 0 0.05  0 0 0 0 0.2  0 0 0 0 0.5  0 0 0 2.6 -1.2"/><feComposite in2="SourceGraphic" operator="in"/></filter></defs><rect width="120" height="68" fill="url(#ss)"/><rect width="120" height="36" fill="#fff" filter="url(#sd)" opacity=".6"/><rect width="120" height="40" fill="#fff" filter="url(#sn)" opacity=".85"/><ellipse cx="60" cy="42" rx="22" ry="4" fill="#fff8c0" opacity=".8"/><g fill="#fff" opacity=".85"><ellipse cx="10" cy="62" rx="2" ry="1.2"/><ellipse cx="34" cy="65" rx="2" ry="1.2"/><ellipse cx="47" cy="63" rx="2" ry="1.2"/><ellipse cx="90" cy="62" rx="2" ry="1.2"/><ellipse cx="110" cy="64" rx="2" ry="1.2"/></g><ellipse cx="70" cy="64" rx="8" ry="3" fill="#c8b898" opacity=".5"/></svg>
<div class="t" style="left:408px;top:669px;color:#cfcfcf;letter-spacing:0.9px;font-size:11px">1360x768</div>
<div class="t" style="left:495px;top:669px;color:#cfcfcf;letter-spacing:0.9px">JPG</div>
<div class="t" style="left:406px;top:691px;color:#ececec">1360x768_754046_[...</div>
<div class="a" style="left:535px;top:569px;width:131px;height:116px;border:1px solid #c2c2c2;border-radius:8px"></div>
<svg style="left:540px;top:587px" width="120" height="68" viewBox="0 0 120 68"><defs><filter id="bn" x="0" y="0" width="100%" height="100%"><feTurbulence type="fractalNoise" baseFrequency="0.05 0.15" numOctaves="3" seed="6"/><feColorMatrix values="0 0 0 0 0.55  0 0 0 0 0.55  0 0 0 0 0.6  0 0 0 -2.2 1.3"/><feComposite in2="SourceGraphic" operator="in"/></filter></defs><rect width="120" height="68" fill="#1e2240"/><rect width="120" height="48" fill="#fff" filter="url(#bn)" opacity=".55"/><rect x="60" width="60" height="48" fill="#1a2040" opacity=".5"/><path d="M52 0 A46 46 0 0 1 56 48" fill="none" stroke="#a8d0f8" stroke-width="1.4"/><path d="M70 40 L110 22" stroke="#6080b0" stroke-width="3" opacity=".5"/><path d="M0 26 L8 24 L18 28 L28 32 L40 40 L46 48 H0Z" fill="#3a5a28"/><path d="M5 30 L15 28 L30 36 L38 46 H5Z" fill="#7a6a30" opacity=".6"/><path d="M0 68 V48 Q30 46 50 48 L62 50 L95 68Z" fill="#d8c080"/><path d="M0 68 V56 Q25 52 45 58 L60 68Z" fill="#e8d498"/><path d="M58 48 L120 47 V68 H95Z" fill="#48a048"/><path d="M55 50 Q80 56 100 68 H88 Q72 58 55 50Z" fill="#8a5a30"/></svg>
<div class="t" style="left:546px;top:669px;color:#cfcfcf;letter-spacing:0.9px;font-size:11px">1360x768</div>
<div class="t" style="left:633px;top:669px;color:#cfcfcf;letter-spacing:0.9px">JPG</div>
<div class="t" style="left:544px;top:691px;color:#ececec">1360x768_754509_[...</div>
<div class="a" style="left:397px;top:713px;width:131px;height:116px;border:1px solid #c2c2c2;border-radius:8px"></div>
<svg style="left:402px;top:731px" width="120" height="68" viewBox="0 0 120 68"><rect width="120" height="68" fill="#5a8a40"/><g fill="#9ac080" opacity=".8"><ellipse cx="20" cy="4" rx="12" ry="5"/><ellipse cx="60" cy="6" rx="14" ry="5"/><ellipse cx="100" cy="3" rx="10" ry="4"/></g><g fill="#3a6a28"><ellipse cx="40" cy="10" rx="10" ry="6"/><ellipse cx="85" cy="12" rx="12" ry="6"/></g><g fill="#d8d8c8" opacity=".7"><rect x="28" y="0" width="1.5" height="14"/><rect x="70" y="0" width="1.5" height="14"/></g></svg>
<div class="t" style="left:408px;top:813px;color:#cfcfcf;letter-spacing:0.9px;font-size:11px">1360x768</div>
<div class="t" style="left:495px;top:813px;color:#cfcfcf;letter-spacing:0.9px">JPG</div>
<div class="a" style="left:535px;top:713px;width:131px;height:116px;border:1px solid #c2c2c2;border-radius:8px"></div>
<svg style="left:540px;top:731px" width="120" height="68" viewBox="0 0 120 68"><rect width="120" height="68" fill="#68b0e8"/><path d="M40 0 H120 V20 Q80 10 40 8Z" fill="#4a9a30"/><path d="M0 0 H30 Q20 8 0 10Z" fill="#5aa040"/></svg>
<div class="t" style="left:546px;top:813px;color:#cfcfcf;letter-spacing:0.9px;font-size:11px">1360x768</div>
<div class="t" style="left:633px;top:813px;color:#cfcfcf;letter-spacing:0.9px">JPG</div>
</div></div>
<div class="a" style="left:678px;top:134px;width:14px;height:14px;border-radius:2px;background:linear-gradient(90deg,#5cc0dc,#2a9fc2 35%,#1584a6 75%,#0e6f8e);border:1px solid #0f6884"></div>
<svg style="left:678px;top:134px" width="14" height="14" viewBox="0 0 14 14"><path d="M3.5 8.5 L7.0 5.0 L10.5 8.5Z" fill="#fff"/></svg>
<div class="a" style="left:678px;top:150px;width:14px;height:110px;border-radius:2px;background:linear-gradient(90deg,#5cc0dc,#2a9fc2 35%,#1584a6 75%,#0e6f8e);border:1px solid #0f6884"></div>
<svg style="left:681px;top:199px" width="8" height="10" viewBox="0 0 8 10"><path d="M1 4 L4 0.5 L7 4Z M1 6 L4 9.5 L7 6Z" fill="#fff"/></svg>
<div class="a" style="left:678px;top:729px;width:14px;height:14px;border-radius:2px;background:linear-gradient(90deg,#5cc0dc,#2a9fc2 35%,#1584a6 75%,#0e6f8e);border:1px solid #0f6884"></div>
<svg style="left:678px;top:729px" width="14" height="14" viewBox="0 0 14 14"><path d="M3.5 5.5 L7.0 9.0 L10.5 5.5Z" fill="#fff"/></svg>
<div class="a" style="left:699px;top:132px;width:661px;height:594px;background:#000"></div>
<div class="a" style="left:1358px;top:132px;width:2px;height:595px;background:#d8d8d8"></div>
<svg style="left:699px;top:241px" width="659" height="373" viewBox="0 0 659 373">
<defs>
<clipPath id="lc"><rect width="659" height="373"/></clipPath>
<filter id="fluff" x="-20%" y="-40%" width="140%" height="180%"><feTurbulence type="fractalNoise" baseFrequency="0.06" numOctaves="3" seed="3"/><feDisplacementMap in="SourceGraphic" scale="14"/></filter>
<filter id="shadeN" x="0" y="0" width="100%" height="100%"><feTurbulence type="fractalNoise" baseFrequency="0.09" numOctaves="2" seed="5"/><feColorMatrix values="0 0 0 0 0.35  0 0 0 0 0.4  0 0 0 0 0.5  0 0 0 -2.2 1.2"/><feComposite in2="SourceGraphic" operator="in"/></filter>
<filter id="tex" x="0" y="0" width="100%" height="100%"><feTurbulence type="fractalNoise" baseFrequency="0.35 0.15" numOctaves="2" seed="9"/><feColorMatrix values="0 0 0 0 0.1  0 0 0 0 0.35  0 0 0 0 0  0 0 0 -1.6 1.0"/><feComposite in2="SourceGraphic" operator="in"/></filter>
<clipPath id="moonclip"><circle cx="84" cy="69" r="68"/></clipPath>
<filter id="moonN" x="0" y="0" width="100%" height="100%"><feTurbulence type="fractalNoise" baseFrequency="0.07" numOctaves="3" seed="21"/><feColorMatrix values="0 0 0 0 0.3  0 0 0 0 0.5  0 0 0 0 0.85  0 0 0 -2.6 1.45"/><feComposite in2="SourceGraphic" operator="in"/></filter>
<clipPath id="planclip"><circle cx="790" cy="233" r="298"/></clipPath>
<filter id="planN" x="0" y="0" width="100%" height="100%"><feTurbulence type="fractalNoise" baseFrequency="0.03 0.05" numOctaves="3" seed="8"/><feColorMatrix values="0 0 0 0 0.85  0 0 0 0 1  0 0 0 0 1  0 0 0 -3 1.55"/><feComposite in2="SourceGraphic" operator="in"/></filter>
<linearGradient id="met" x1="0" y1="1" x2="1" y2="0"><stop offset="0" stop-color="#e0ffff"/><stop offset=".3" stop-color="#60d8ff"/><stop offset="1" stop-color="#2080e0" stop-opacity="0"/></linearGradient>
<clipPath id="mtnclip"><path d="M120 190 L200 166 L260 156 L330 143 L380 144 L420 143 L470 148 L500 147 L540 160 L572 170 L600 190 L622 222 L645 245 L659 262 V300 H115Z"/></clipPath>
<clipPath id="treeclip"><path d="M-20 150 L0 158 L12 170 L22 166 L35 188 L50 194 L62 186 L75 203 L92 196 L105 176 L115 160 L128 156 L138 173 L150 190 L170 203 L185 220 L205 226 L218 203 L230 188 L243 210 L252 243 L262 263 L280 278 L300 290 V300 H-20Z"/></clipPath>
<filter id="fol" x="0" y="0" width="100%" height="100%"><feTurbulence type="fractalNoise" baseFrequency="0.12" numOctaves="3" seed="11"/><feColorMatrix values="0 0 0 0 0.2  0 0 0 0 0.55  0 0 0 0 0.15  0 0 0 -3 1.6"/><feComposite in2="SourceGraphic" operator="in"/></filter>
<filter id="jag" x="-10%" y="-20%" width="120%" height="140%"><feTurbulence type="fractalNoise" baseFrequency="0.18" numOctaves="2" seed="2"/><feDisplacementMap in="SourceGraphic" scale="9"/></filter>
<linearGradient id="sky" x1="0" y1="0" x2="0" y2="1"><stop offset="0" stop-color="#06104e"/><stop offset=".2" stop-color="#08208a"/><stop offset=".4" stop-color="#0f48d0"/><stop offset=".55" stop-color="#2a7cf8"/></linearGradient>
<radialGradient id="moon" cx=".42" cy=".36" r=".64"><stop offset="0" stop-color="#ffffff"/><stop offset=".5" stop-color="#dcecfa"/><stop offset=".82" stop-color="#9cc0ee"/><stop offset="1" stop-color="#4a88f0"/></radialGradient>
<radialGradient id="glow" cx=".5" cy=".5" r=".5"><stop offset="0" stop-color="#d0ffff"/><stop offset=".25" stop-color="#50d8ff" stop-opacity=".75"/><stop offset="1" stop-color="#1a80e0" stop-opacity="0"/></radialGradient>
<radialGradient id="planet" cx="0" cy=".3" r="1" fx="0" fy=".3"><stop offset="0" stop-color="#b0fff4"/><stop offset=".08" stop-color="#40d8cc"/><stop offset=".35" stop-color="#1a9ab4"/><stop offset="1" stop-color="#1a5a9c"/></radialGradient>
<radialGradient id="lowglow" cx=".5" cy=".5" r=".5"><stop offset="0" stop-color="#3a90ff" stop-opacity=".8"/><stop offset="1" stop-color="#2a70f0" stop-opacity="0"/></radialGradient>
<linearGradient id="cshade" x1="0" y1="0" x2="0" y2="1"><stop offset="0" stop-color="#fff" stop-opacity="0"/><stop offset=".45" stop-color="#fff" stop-opacity="0"/><stop offset="1" stop-color="#6a7a90" stop-opacity=".7"/></linearGradient>
<linearGradient id="grass" x1="0" y1="0" x2="0" y2="1"><stop offset="0" stop-color="#2a8a0e"/><stop offset=".12" stop-color="#3aac12"/><stop offset=".4" stop-color="#4cc616"/><stop offset="1" stop-color="#40b810"/></linearGradient>
<linearGradient id="mtn" x1="0" y1="0" x2="0" y2="1"><stop offset="0" stop-color="#1a3a60"/><stop offset=".25" stop-color="#123a30"/><stop offset=".55" stop-color="#12401c"/><stop offset="1" stop-color="#1a5a14"/></linearGradient>
<linearGradient id="bm" x1="0" y1="0" x2="0" y2="1"><stop offset="0" stop-color="#4a6aa8"/><stop offset="1" stop-color="#1a3470"/></linearGradient>
</defs>
<g clip-path="url(#lc)">
<rect width="659" height="373" fill="url(#sky)"/>
<ellipse cx="110" cy="150" rx="170" ry="70" fill="url(#lowglow)"/>
<g fill="#fff" opacity=".75"><circle cx="213" cy="24" r="0.8"/><circle cx="32" cy="131" r="0.5"/><circle cx="241" cy="9" r="0.8"/><circle cx="141" cy="14" r="0.6"/><circle cx="46" cy="15" r="0.6"/><circle cx="39" cy="90" r="0.5"/><circle cx="416" cy="93" r="0.5"/><circle cx="380" cy="63" r="0.5"/><circle cx="31" cy="137" r="0.6"/><circle cx="276" cy="87" r="0.8"/><circle cx="203" cy="131" r="0.5"/><circle cx="68" cy="91" r="0.5"/><circle cx="245" cy="88" r="0.5"/><circle cx="372" cy="99" r="0.6"/><circle cx="448" cy="68" r="0.6"/><circle cx="307" cy="148" r="0.6"/><circle cx="198" cy="127" r="0.8"/><circle cx="514" cy="13" r="0.6"/><circle cx="346" cy="140" r="0.8"/><circle cx="296" cy="97" r="0.5"/><circle cx="78" cy="67" r="0.6"/><circle cx="100" cy="78" r="0.5"/><circle cx="634" cy="12" r="0.8"/><circle cx="378" cy="140" r="0.6"/><circle cx="224" cy="56" r="0.6"/><circle cx="382" cy="73" r="0.5"/><circle cx="623" cy="76" r="0.8"/><circle cx="43" cy="117" r="0.6"/><circle cx="426" cy="159" r="0.6"/><circle cx="188" cy="62" r="0.8"/><circle cx="229" cy="151" r="0.6"/><circle cx="111" cy="19" r="0.5"/><circle cx="144" cy="46" r="0.8"/><circle cx="163" cy="63" r="0.6"/><circle cx="53" cy="72" r="0.8"/><circle cx="183" cy="22" r="0.6"/><circle cx="569" cy="45" r="0.6"/><circle cx="650" cy="109" r="0.6"/><circle cx="631" cy="24" r="0.5"/><circle cx="100" cy="105" r="0.5"/><circle cx="320" cy="94" r="0.6"/><circle cx="186" cy="23" r="0.8"/><circle cx="243" cy="91" r="0.5"/><circle cx="455" cy="82" r="0.8"/><circle cx="432" cy="118" r="0.6"/><circle cx="593" cy="125" r="0.8"/><circle cx="526" cy="63" r="0.6"/><circle cx="260" cy="77" r="0.6"/><circle cx="41" cy="11" r="0.5"/><circle cx="290" cy="18" r="0.8"/><circle cx="35" cy="0" r="0.5"/><circle cx="354" cy="152" r="0.8"/><circle cx="17" cy="140" r="0.8"/><circle cx="248" cy="102" r="0.6"/><circle cx="397" cy="76" r="0.5"/><circle cx="559" cy="159" r="0.6"/><circle cx="317" cy="50" r="0.5"/><circle cx="67" cy="55" r="0.6"/><circle cx="315" cy="111" r="0.8"/><circle cx="15" cy="152" r="0.8"/><circle cx="238" cy="110" r="0.5"/><circle cx="500" cy="48" r="0.8"/><circle cx="569" cy="111" r="0.6"/><circle cx="342" cy="145" r="0.6"/><circle cx="509" cy="85" r="0.8"/><circle cx="217" cy="36" r="0.5"/><circle cx="531" cy="131" r="0.8"/><circle cx="529" cy="32" r="0.6"/><circle cx="234" cy="5" r="0.5"/><circle cx="521" cy="76" r="0.5"/><circle cx="456" cy="153" r="0.6"/><circle cx="533" cy="116" r="0.6"/><circle cx="629" cy="58" r="0.5"/><circle cx="67" cy="75" r="0.6"/><circle cx="135" cy="100" r="0.8"/><circle cx="554" cy="77" r="0.8"/><circle cx="227" cy="103" r="0.8"/><circle cx="79" cy="62" r="0.8"/><circle cx="494" cy="76" r="0.5"/><circle cx="286" cy="102" r="0.5"/><circle cx="528" cy="155" r="0.6"/><circle cx="305" cy="119" r="0.5"/><circle cx="478" cy="27" r="0.5"/><circle cx="18" cy="95" r="0.6"/><circle cx="531" cy="23" r="0.8"/><circle cx="646" cy="105" r="0.6"/><circle cx="103" cy="88" r="0.5"/><circle cx="9" cy="155" r="0.8"/><circle cx="68" cy="120" r="0.5"/><circle cx="286" cy="139" r="0.5"/><circle cx="18" cy="34" r="0.8"/><circle cx="159" cy="94" r="0.6"/><circle cx="359" cy="133" r="0.5"/><circle cx="600" cy="57" r="0.6"/><circle cx="437" cy="130" r="0.8"/><circle cx="277" cy="147" r="0.8"/><circle cx="86" cy="24" r="0.8"/><circle cx="12" cy="70" r="0.5"/><circle cx="401" cy="124" r="0.5"/><circle cx="114" cy="76" r="0.8"/><circle cx="79" cy="10" r="0.8"/><circle cx="342" cy="89" r="0.5"/><circle cx="582" cy="9" r="0.5"/><circle cx="182" cy="124" r="0.8"/><circle cx="298" cy="4" r="0.5"/><circle cx="292" cy="98" r="0.8"/><circle cx="399" cy="32" r="0.6"/><circle cx="298" cy="85" r="0.6"/><circle cx="335" cy="40" r="0.8"/><circle cx="578" cy="151" r="0.6"/><circle cx="608" cy="143" r="0.5"/><circle cx="554" cy="22" r="0.5"/><circle cx="259" cy="51" r="0.8"/><circle cx="159" cy="12" r="0.8"/><circle cx="200" cy="20" r="0.5"/><circle cx="619" cy="103" r="0.6"/><circle cx="94" cy="141" r="0.6"/><circle cx="145" cy="152" r="0.6"/><circle cx="583" cy="26" r="0.8"/><circle cx="549" cy="26" r="0.6"/><circle cx="655" cy="65" r="0.6"/><circle cx="129" cy="51" r="0.8"/><circle cx="241" cy="54" r="0.6"/><circle cx="290" cy="3" r="0.6"/><circle cx="341" cy="47" r="0.5"/><circle cx="74" cy="147" r="0.5"/><circle cx="640" cy="17" r="0.6"/><circle cx="179" cy="145" r="0.5"/><circle cx="178" cy="21" r="0.6"/><circle cx="560" cy="108" r="0.6"/><circle cx="268" cy="86" r="0.8"/><circle cx="376" cy="112" r="0.5"/><circle cx="184" cy="128" r="0.5"/><circle cx="280" cy="12" r="0.5"/><circle cx="418" cy="128" r="0.5"/><circle cx="401" cy="36" r="0.6"/><circle cx="569" cy="73" r="0.6"/><circle cx="655" cy="67" r="0.6"/><circle cx="410" cy="7" r="0.8"/><circle cx="157" cy="18" r="0.5"/><circle cx="173" cy="29" r="0.6"/><circle cx="414" cy="85" r="0.5"/><circle cx="191" cy="80" r="0.5"/><circle cx="178" cy="129" r="0.6"/><circle cx="24" cy="3" r="0.8"/><circle cx="363" cy="30" r="0.6"/><circle cx="162" cy="72" r="0.8"/><circle cx="540" cy="69" r="0.6"/><circle cx="360" cy="142" r="0.8"/><circle cx="203" cy="34" r="0.5"/><circle cx="226" cy="133" r="0.8"/><circle cx="480" cy="22" r="0.6"/><circle cx="647" cy="134" r="0.5"/><circle cx="47" cy="119" r="0.6"/><circle cx="284" cy="9" r="0.8"/><circle cx="554" cy="139" r="0.8"/><circle cx="640" cy="96" r="0.8"/><circle cx="193" cy="74" r="0.5"/><circle cx="177" cy="1" r="0.6"/><circle cx="634" cy="156" r="0.8"/><circle cx="213" cy="6" r="0.6"/><circle cx="144" cy="29" r="0.6"/><circle cx="251" cy="76" r="0.8"/><circle cx="432" cy="40" r="0.5"/><circle cx="60" cy="131" r="0.5"/><circle cx="263" cy="7" r="0.5"/><circle cx="197" cy="101" r="0.5"/><circle cx="386" cy="85" r="0.5"/><circle cx="433" cy="115" r="0.8"/><circle cx="257" cy="52" r="0.6"/><circle cx="98" cy="116" r="0.8"/><circle cx="95" cy="132" r="0.8"/><circle cx="588" cy="100" r="0.8"/><circle cx="462" cy="81" r="0.8"/><circle cx="496" cy="91" r="0.5"/><circle cx="545" cy="93" r="0.8"/><circle cx="450" cy="111" r="0.5"/><circle cx="56" cy="7" r="0.8"/><circle cx="238" cy="17" r="0.6"/><circle cx="368" cy="100" r="0.8"/><circle cx="350" cy="39" r="0.6"/><circle cx="2" cy="128" r="0.8"/><circle cx="615" cy="144" r="0.5"/><circle cx="434" cy="11" r="0.8"/><circle cx="312" cy="129" r="0.6"/><circle cx="155" cy="121" r="0.5"/><circle cx="488" cy="156" r="0.6"/><circle cx="557" cy="12" r="0.8"/><circle cx="189" cy="7" r="0.8"/><circle cx="424" cy="12" r="0.5"/><circle cx="219" cy="104" r="0.8"/><circle cx="201" cy="91" r="0.5"/><circle cx="318" cy="78" r="0.8"/><circle cx="66" cy="35" r="0.6"/><circle cx="192" cy="83" r="0.6"/><circle cx="307" cy="123" r="0.8"/><circle cx="131" cy="157" r="0.6"/><circle cx="12" cy="73" r="0.8"/><circle cx="638" cy="72" r="0.6"/><circle cx="255" cy="147" r="0.5"/><circle cx="49" cy="14" r="0.8"/><circle cx="345" cy="152" r="0.5"/><circle cx="398" cy="101" r="0.6"/><circle cx="584" cy="113" r="0.5"/><circle cx="328" cy="140" r="0.6"/><circle cx="16" cy="1" r="0.6"/><circle cx="449" cy="65" r="0.8"/><circle cx="93" cy="55" r="0.6"/><circle cx="80" cy="53" r="0.6"/><circle cx="495" cy="134" r="0.5"/><circle cx="619" cy="31" r="0.5"/><circle cx="594" cy="46" r="0.6"/><circle cx="43" cy="62" r="0.8"/><circle cx="50" cy="148" r="0.6"/><circle cx="563" cy="45" r="0.5"/><circle cx="550" cy="46" r="0.5"/><circle cx="164" cy="43" r="0.8"/><circle cx="208" cy="124" r="0.6"/><circle cx="583" cy="130" r="0.8"/><circle cx="264" cy="140" r="0.8"/></g>
<ellipse cx="330" cy="88" rx="75" ry="50" fill="url(#glow)"/>
<circle cx="490" cy="118" r="52" fill="#1c3c90" stroke="#6a9ae0" stroke-width="1.2"/>
<circle cx="790" cy="233" r="300" fill="url(#planet)"/>
<path d="M602 0 A300 300 0 0 0 515 110" fill="none" stroke="#e8fffa" stroke-width="5" opacity=".95"/>
<circle cx="790" cy="233" r="300" fill="#fff" filter="url(#planN)" opacity=".6" clip-path="url(#planclip)"/>
<path d="M440 36 L445 44 L518 0 L512 -2Z" fill="url(#met)"/>
<path d="M480 46 L486 54 L580 6 L574 2Z" fill="url(#met)"/>
<circle cx="443" cy="40" r="3" fill="#e8ffff"/><circle cx="484" cy="50" r="3.4" fill="#e8ffff"/>
<circle cx="84" cy="69" r="68" fill="url(#moon)"/>
<circle cx="84" cy="69" r="68" fill="#fff" filter="url(#moonN)" opacity=".8" clip-path="url(#moonclip)"/>
<g filter="url(#fluff)"><ellipse cx="400" cy="88" rx="32" ry="18" fill="#a8b4c4"/><ellipse cx="397.4" cy="84.8" rx="27.5" ry="13.3" fill="#e4eaf2"/><ellipse cx="396.2" cy="82.6" rx="19.2" ry="9.0" fill="#fbfdff"/><ellipse cx="365" cy="92" rx="28" ry="18" fill="#a8b4c4"/><ellipse cx="362.8" cy="88.8" rx="24.1" ry="13.3" fill="#e4eaf2"/><ellipse cx="361.6" cy="86.6" rx="16.8" ry="9.0" fill="#fbfdff"/><ellipse cx="440" cy="92" rx="30" ry="18" fill="#a8b4c4"/><ellipse cx="437.6" cy="88.8" rx="25.8" ry="13.3" fill="#e4eaf2"/><ellipse cx="436.4" cy="86.6" rx="18.0" ry="9.0" fill="#fbfdff"/><ellipse cx="338" cy="102" rx="20" ry="14" fill="#a8b4c4"/><ellipse cx="336.4" cy="99.5" rx="17.2" ry="10.4" fill="#e4eaf2"/><ellipse cx="335.6" cy="97.8" rx="12.0" ry="7.0" fill="#fbfdff"/><ellipse cx="478" cy="104" rx="30" ry="16" fill="#a8b4c4"/><ellipse cx="475.6" cy="101.1" rx="25.8" ry="11.8" fill="#e4eaf2"/><ellipse cx="474.4" cy="99.2" rx="18.0" ry="8.0" fill="#fbfdff"/><ellipse cx="512" cy="114" rx="28" ry="15" fill="#a8b4c4"/><ellipse cx="509.8" cy="111.3" rx="24.1" ry="11.1" fill="#e4eaf2"/><ellipse cx="508.6" cy="109.5" rx="16.8" ry="7.5" fill="#fbfdff"/><ellipse cx="58" cy="120" rx="20" ry="14" fill="#a8b4c4"/><ellipse cx="56.4" cy="117.5" rx="17.2" ry="10.4" fill="#e4eaf2"/><ellipse cx="55.6" cy="115.8" rx="12.0" ry="7.0" fill="#fbfdff"/><ellipse cx="305" cy="120" rx="26" ry="16" fill="#a8b4c4"/><ellipse cx="302.9" cy="117.1" rx="22.4" ry="11.8" fill="#e4eaf2"/><ellipse cx="301.9" cy="115.2" rx="15.6" ry="8.0" fill="#fbfdff"/><ellipse cx="28" cy="121" rx="15" ry="12" fill="#a8b4c4"/><ellipse cx="26.8" cy="118.8" rx="12.9" ry="8.9" fill="#e4eaf2"/><ellipse cx="26.2" cy="117.4" rx="9.0" ry="6.0" fill="#fbfdff"/><ellipse cx="545" cy="122" rx="30" ry="14" fill="#a8b4c4"/><ellipse cx="542.6" cy="119.5" rx="25.8" ry="10.4" fill="#e4eaf2"/><ellipse cx="541.4" cy="117.8" rx="18.0" ry="7.0" fill="#fbfdff"/><ellipse cx="8" cy="125" rx="12" ry="10" fill="#a8b4c4"/><ellipse cx="7.0" cy="123.2" rx="10.3" ry="7.4" fill="#e4eaf2"/><ellipse cx="6.6" cy="122.0" rx="7.2" ry="5.0" fill="#fbfdff"/><ellipse cx="390" cy="125" rx="60" ry="24" fill="#a8b4c4"/><ellipse cx="385.2" cy="120.7" rx="51.6" ry="17.8" fill="#e4eaf2"/><ellipse cx="382.8" cy="117.8" rx="36.0" ry="12.0" fill="#fbfdff"/><ellipse cx="85" cy="128" rx="16" ry="12" fill="#a8b4c4"/><ellipse cx="83.7" cy="125.8" rx="13.8" ry="8.9" fill="#e4eaf2"/><ellipse cx="83.1" cy="124.4" rx="9.6" ry="6.0" fill="#fbfdff"/><ellipse cx="578" cy="128" rx="30" ry="14" fill="#a8b4c4"/><ellipse cx="575.6" cy="125.5" rx="25.8" ry="10.4" fill="#e4eaf2"/><ellipse cx="574.4" cy="123.8" rx="18.0" ry="7.0" fill="#fbfdff"/><ellipse cx="278" cy="132" rx="26" ry="14" fill="#a8b4c4"/><ellipse cx="275.9" cy="129.5" rx="22.4" ry="10.4" fill="#e4eaf2"/><ellipse cx="274.9" cy="127.8" rx="15.6" ry="7.0" fill="#fbfdff"/><ellipse cx="610" cy="134" rx="30" ry="15" fill="#a8b4c4"/><ellipse cx="607.6" cy="131.3" rx="25.8" ry="11.1" fill="#e4eaf2"/><ellipse cx="606.4" cy="129.5" rx="18.0" ry="7.5" fill="#fbfdff"/><ellipse cx="470" cy="135" rx="55" ry="22" fill="#a8b4c4"/><ellipse cx="465.6" cy="131.0" rx="47.3" ry="16.3" fill="#e4eaf2"/><ellipse cx="463.4" cy="128.4" rx="33.0" ry="11.0" fill="#fbfdff"/><ellipse cx="640" cy="140" rx="26" ry="16" fill="#a8b4c4"/><ellipse cx="637.9" cy="137.1" rx="22.4" ry="11.8" fill="#e4eaf2"/><ellipse cx="636.9" cy="135.2" rx="15.6" ry="8.0" fill="#fbfdff"/><ellipse cx="300" cy="142" rx="50" ry="12" fill="#a8b4c4"/><ellipse cx="296.0" cy="139.8" rx="43.0" ry="8.9" fill="#e4eaf2"/><ellipse cx="294.0" cy="138.4" rx="30.0" ry="6.0" fill="#fbfdff"/><ellipse cx="245" cy="143" rx="30" ry="12" fill="#a8b4c4"/><ellipse cx="242.6" cy="140.8" rx="25.8" ry="8.9" fill="#e4eaf2"/><ellipse cx="241.4" cy="139.4" rx="18.0" ry="6.0" fill="#fbfdff"/><ellipse cx="330" cy="145" rx="40" ry="12" fill="#a8b4c4"/><ellipse cx="326.8" cy="142.8" rx="34.4" ry="8.9" fill="#e4eaf2"/><ellipse cx="325.2" cy="141.4" rx="24.0" ry="6.0" fill="#fbfdff"/><ellipse cx="40" cy="146" rx="22" ry="12" fill="#a8b4c4"/><ellipse cx="38.2" cy="143.8" rx="18.9" ry="8.9" fill="#e4eaf2"/><ellipse cx="37.4" cy="142.4" rx="13.2" ry="6.0" fill="#fbfdff"/><ellipse cx="8" cy="148" rx="14" ry="9" fill="#a8b4c4"/><ellipse cx="6.9" cy="146.4" rx="12.0" ry="6.7" fill="#e4eaf2"/><ellipse cx="6.3" cy="145.3" rx="8.4" ry="4.5" fill="#fbfdff"/><ellipse cx="70" cy="150" rx="24" ry="12" fill="#a8b4c4"/><ellipse cx="68.1" cy="147.8" rx="20.6" ry="8.9" fill="#e4eaf2"/><ellipse cx="67.1" cy="146.4" rx="14.4" ry="6.0" fill="#fbfdff"/><ellipse cx="205" cy="150" rx="30" ry="10" fill="#a8b4c4"/><ellipse cx="202.6" cy="148.2" rx="25.8" ry="7.4" fill="#e4eaf2"/><ellipse cx="201.4" cy="147.0" rx="18.0" ry="5.0" fill="#fbfdff"/><ellipse cx="660" cy="150" rx="20" ry="16" fill="#a8b4c4"/><ellipse cx="658.4" cy="147.1" rx="17.2" ry="11.8" fill="#e4eaf2"/><ellipse cx="657.6" cy="145.2" rx="12.0" ry="8.0" fill="#fbfdff"/><ellipse cx="540" cy="150" rx="50" ry="18" fill="#a8b4c4"/><ellipse cx="536.0" cy="146.8" rx="43.0" ry="13.3" fill="#e4eaf2"/><ellipse cx="534.0" cy="144.6" rx="30.0" ry="9.0" fill="#fbfdff"/><ellipse cx="420" cy="150" rx="40" ry="12" fill="#a8b4c4"/><ellipse cx="416.8" cy="147.8" rx="34.4" ry="8.9" fill="#e4eaf2"/><ellipse cx="415.2" cy="146.4" rx="24.0" ry="6.0" fill="#fbfdff"/><ellipse cx="165" cy="155" rx="26" ry="8" fill="#a8b4c4"/><ellipse cx="162.9" cy="153.6" rx="22.4" ry="5.9" fill="#e4eaf2"/><ellipse cx="161.9" cy="152.6" rx="15.6" ry="4.0" fill="#fbfdff"/><ellipse cx="20" cy="156" rx="16" ry="9" fill="#a8b4c4"/><ellipse cx="18.7" cy="154.4" rx="13.8" ry="6.7" fill="#e4eaf2"/><ellipse cx="18.1" cy="153.3" rx="9.6" ry="4.5" fill="#fbfdff"/><ellipse cx="240" cy="156" rx="50" ry="9" fill="#a8b4c4"/><ellipse cx="236.0" cy="154.4" rx="43.0" ry="6.7" fill="#e4eaf2"/><ellipse cx="234.0" cy="153.3" rx="30.0" ry="4.5" fill="#fbfdff"/><ellipse cx="95" cy="158" rx="16" ry="8" fill="#a8b4c4"/><ellipse cx="93.7" cy="156.6" rx="13.8" ry="5.9" fill="#e4eaf2"/><ellipse cx="93.1" cy="155.6" rx="9.6" ry="4.0" fill="#fbfdff"/><ellipse cx="130" cy="160" rx="20" ry="6" fill="#a8b4c4"/><ellipse cx="128.4" cy="158.9" rx="17.2" ry="4.4" fill="#e4eaf2"/><ellipse cx="127.6" cy="158.2" rx="12.0" ry="3.0" fill="#fbfdff"/><ellipse cx="600" cy="160" rx="55" ry="16" fill="#a8b4c4"/><ellipse cx="595.6" cy="157.1" rx="47.3" ry="11.8" fill="#e4eaf2"/><ellipse cx="593.4" cy="155.2" rx="33.0" ry="8.0" fill="#fbfdff"/><ellipse cx="190" cy="160" rx="35" ry="6" fill="#a8b4c4"/><ellipse cx="187.2" cy="158.9" rx="30.1" ry="4.4" fill="#e4eaf2"/><ellipse cx="185.8" cy="158.2" rx="21.0" ry="3.0" fill="#fbfdff"/><ellipse cx="500" cy="160" rx="40" ry="10" fill="#a8b4c4"/><ellipse cx="496.8" cy="158.2" rx="34.4" ry="7.4" fill="#e4eaf2"/><ellipse cx="495.2" cy="157.0" rx="24.0" ry="5.0" fill="#fbfdff"/><ellipse cx="560" cy="168" rx="35" ry="9" fill="#a8b4c4"/><ellipse cx="557.2" cy="166.4" rx="30.1" ry="6.7" fill="#e4eaf2"/><ellipse cx="555.8" cy="165.3" rx="21.0" ry="4.5" fill="#fbfdff"/><ellipse cx="645" cy="170" rx="28" ry="12" fill="#a8b4c4"/><ellipse cx="642.8" cy="167.8" rx="24.1" ry="8.9" fill="#e4eaf2"/><ellipse cx="641.6" cy="166.4" rx="16.8" ry="6.0" fill="#fbfdff"/></g>
<g filter="url(#fluff)" opacity=".55"><g fill="#fff" filter="url(#shadeN)"><ellipse cx="130" cy="160" rx="20" ry="6"/><ellipse cx="165" cy="155" rx="26" ry="8"/><ellipse cx="205" cy="150" rx="30" ry="10"/><ellipse cx="245" cy="143" rx="30" ry="12"/><ellipse cx="278" cy="132" rx="26" ry="14"/><ellipse cx="305" cy="120" rx="26" ry="16"/><ellipse cx="338" cy="102" rx="20" ry="14"/><ellipse cx="365" cy="92" rx="28" ry="18"/><ellipse cx="400" cy="88" rx="32" ry="18"/><ellipse cx="440" cy="92" rx="30" ry="18"/><ellipse cx="478" cy="104" rx="30" ry="16"/><ellipse cx="512" cy="114" rx="28" ry="15"/><ellipse cx="545" cy="122" rx="30" ry="14"/><ellipse cx="578" cy="128" rx="30" ry="14"/><ellipse cx="610" cy="134" rx="30" ry="15"/><ellipse cx="640" cy="140" rx="26" ry="16"/><ellipse cx="660" cy="150" rx="20" ry="16"/><ellipse cx="300" cy="142" rx="50" ry="12"/><ellipse cx="390" cy="125" rx="60" ry="24"/><ellipse cx="470" cy="135" rx="55" ry="22"/><ellipse cx="540" cy="150" rx="50" ry="18"/><ellipse cx="600" cy="160" rx="55" ry="16"/><ellipse cx="645" cy="170" rx="28" ry="12"/><ellipse cx="240" cy="156" rx="50" ry="9"/><ellipse cx="330" cy="145" rx="40" ry="12"/><ellipse cx="420" cy="150" rx="40" ry="12"/><ellipse cx="190" cy="160" rx="35" ry="6"/><ellipse cx="500" cy="160" rx="40" ry="10"/><ellipse cx="560" cy="168" rx="35" ry="9"/><ellipse cx="8" cy="125" rx="12" ry="10"/><ellipse cx="28" cy="121" rx="15" ry="12"/><ellipse cx="58" cy="120" rx="20" ry="14"/><ellipse cx="85" cy="128" rx="16" ry="12"/><ellipse cx="40" cy="146" rx="22" ry="12"/><ellipse cx="70" cy="150" rx="24" ry="12"/><ellipse cx="20" cy="156" rx="16" ry="9"/><ellipse cx="95" cy="158" rx="16" ry="8"/><ellipse cx="8" cy="148" rx="14" ry="9"/></g></g>
<path d="M0 150 L12 146 L25 150 L35 156 L48 158 L62 162 L80 165 L100 178 L108 200 L0 210Z" fill="url(#bm)"/>
<path d="M570 170 L600 162 L630 166 L659 168 V250 L600 240Z" fill="url(#bm)"/>
<path d="M120 190 L200 166 L260 156 L330 143 L380 144 L420 143 L470 148 L500 147 L540 160 L572 170 L600 190 L622 222 L645 245 L659 262 V300 H115Z" fill="url(#mtn)"/>
<rect x="115" y="140" width="545" height="160" fill="#fff" filter="url(#fol)" opacity=".16" clip-path="url(#mtnclip)"/>
<g fill="#48b420" opacity=".7" filter="url(#jag)"><path d="M250 238 L300 225 L360 222 L400 230 L380 246 L300 250Z"/><path d="M380 210 L430 200 L470 205 L450 222 L400 225Z"/><path d="M420 235 L480 222 L540 225 L560 240 L510 252 L440 250Z"/><path d="M470 185 L520 178 L560 190 L540 205 L480 200Z"/><path d="M540 215 L590 208 L615 235 L600 255 L560 248Z"/><path d="M300 200 L340 192 L370 198 L340 210Z"/><path d="M240 225 L270 215 L290 225 L260 235Z"/><path d="M600 200 L630 195 L640 215 L610 220Z"/><path d="M180 230 L230 220 L250 240 L200 245Z"/></g>
<rect x="115" y="140" width="545" height="160" fill="#fff" filter="url(#fol)" opacity=".14" clip-path="url(#mtnclip)"/>
<path d="M246 250 Q300 244 377 248 L377 276 L262 272Z" fill="#1a8a84"/>
<path d="M420 262 L525 258 L525 276 L425 280Z" fill="#1a8a84"/>
<g filter="url(#jag)">
<path d="M-20 150 L0 158 L12 170 L22 166 L35 188 L50 194 L62 186 L75 203 L92 196 L105 176 L115 160 L128 156 L138 173 L150 190 L170 203 L185 220 L205 226 L218 203 L230 188 L243 210 L252 243 L262 263 L280 278 L300 290 V300 H-20Z" fill="#0a3c0e"/>
<g fill="#1a6a18" opacity=".8"><path d="M15 280 L30 200 L48 280Z"/><path d="M60 285 L82 175 L105 285Z"/><path d="M95 285 L125 160 L150 285Z"/><path d="M140 290 L168 215 L195 290Z"/><path d="M200 290 L228 195 L252 290Z"/></g><rect x="-20" y="150" width="320" height="150" fill="#fff" filter="url(#fol)" opacity=".35" clip-path="url(#treeclip)"/>
<path d="M250 292 L262 258 L274 292Z M268 292 L280 262 L292 292Z M290 292 L300 268 L310 292Z M318 292 L332 252 L346 292Z M336 292 L348 258 L360 292Z M360 292 L372 262 L384 292Z M382 290 L395 262 L408 290Z M405 290 L418 258 L430 290Z M430 290 L440 268 L450 290Z M450 288 L464 255 L478 288Z M472 288 L482 265 L492 288Z M490 286 L502 262 L514 286Z M508 284 L518 266 L528 284Z" fill="#0a3a10"/><g fill="#1a6a18" opacity=".6"><ellipse cx="300" cy="282" rx="30" ry="10"/><ellipse cx="420" cy="282" rx="40" ry="8"/></g>
<path d="M518 280 L533 245 L544 205 L555 184 L566 208 L576 240 L594 280Z" fill="#072a0a"/>
<path d="M588 278 L603 232 L614 246 L625 222 L638 242 L648 224 L659 236 V272Z" fill="#0a3a10"/>
</g>
<path d="M0 275 Q120 278 250 290 Q400 290 500 276 Q600 266 659 258 V373 H0Z" fill="url(#grass)"/>
<path d="M0 275 Q120 278 250 290 Q400 290 500 276 Q600 266 659 258 V373 H0Z" fill="#fff" filter="url(#tex)" opacity=".55"/>

</g>
</svg>
<div class="a" style="left:694px;top:726px;width:666px;height:1px;background:#f0f0f0"></div>
<div class="a" style="left:694px;top:727px;width:666px;height:19px;background:#b4b4b4"></div>
<div class="t" style="left:702px;top:731px;color:#1c4860;letter-spacing:-0.2px">1360 x 768 (1.04 MP)</div>
<div class="t" style="left:811px;top:731px;color:#1c4860">24bit</div>
<div class="t" style="left:840px;top:731px;color:#1c4860">BMP</div>
<div class="t" style="left:870px;top:731px;color:#1c4860">2.98 MB</div>
<div class="t" style="left:918px;top:731px;color:#1c4860">2017-07-10 20:17:17</div>
<div class="t" style="left:1294px;top:730px;color:#15605e;font-weight:bold;font-family:Liberation Serif;font-size:12px">1:1</div>
<svg style="left:1317px;top:729px" width="16" height="14" viewBox="0 0 16 14"><defs><linearGradient id="fitg" x1="0" y1="0" x2="1" y2="1"><stop offset="0" stop-color="#c8fcff"/><stop offset="1" stop-color="#98b8e8"/></linearGradient></defs><rect x="3" y="3" width="10" height="8" fill="url(#fitg)" stroke="#15605e" stroke-width="1.4"/><path d="M8 0.5 V3 M6 0.8 H10 M8 11 V13.5 M6 13.2 H10 M0.8 7 H3 M1 5 V9 M13 7 H15.2 M15 5 V9" stroke="#15605e" stroke-width="1.2"/></svg>
<svg style="left:1340px;top:729px" width="16" height="14" viewBox="0 0 16 14"><rect x="3" y="3" width="10" height="8" fill="url(#fitg)" stroke="#15605e" stroke-width="1.4"/><path d="M0.5 0.5 L3 3 M15.5 0.5 L13 3 M0.5 13.5 L3 11 M15.5 13.5 L13 11" stroke="#15605e" stroke-width="1.6"/><path d="M0 0 H3 L0 3Z M16 0 H13 L16 3Z M0 14 H3 L0 11Z M16 14 H13 L16 11Z" fill="#15605e"/></svg>
<div class="a" style="left:0px;top:746px;width:1360px;height:20px;background:#979797"></div>
<div class="a" style="left:0px;top:766px;width:1360px;height:2px;background:#33a9c9"></div>
<div class="t" style="left:8px;top:752px;color:#111">11.bmp [ 1 / 44 ]</div>
<div class="a" style="left:386px;top:750px;width:1px;height:16px;background:#3a3a3a"></div>
<div class="a" style="left:497px;top:750px;width:1px;height:16px;background:#3a3a3a"></div>
<div class="a" style="left:656px;top:750px;width:1px;height:16px;background:#3a3a3a"></div>
<div class="a" style="left:781px;top:750px;width:1px;height:16px;background:#3a3a3a"></div>
<div class="t" style="left:422px;top:752px;color:#111">Папок: 0</div>
<div class="t" style="left:524px;top:752px;color:#111">Файлов: 44 (31.9 MB)</div>
<div class="t" style="left:692px;top:752px;color:#111">Выбрано: 1</div>
<div class="a" style="left:38px;top:47px;width:246px;height:369px;background:#e6e6e6;border:1px solid #5a5a5a;box-shadow:inset 1px 1px 0 #fafafa"></div>
<div class="a" style="left:54px;top:96px;width:214px;height:1px;background:#9c9c94"></div>
<div class="a" style="left:54px;top:125px;width:214px;height:1px;background:#9c9c94"></div>
<div class="a" style="left:54px;top:198px;width:214px;height:1px;background:#9c9c94"></div>
<div class="a" style="left:54px;top:293px;width:214px;height:1px;background:#9c9c94"></div>
<div class="a" style="left:54px;top:388px;width:214px;height:1px;background:#9c9c94"></div>
<div class="a" style="left:39px;top:129px;width:242px;height:22px;background:#5e5e5e"></div>
<div class="t" style="left:71px;top:54px;color:#8e8e8e">Отменить</div>
<div class="t" style="right:1095px;top:54px;color:#8e8e8e">Ctrl+Z</div>
<div class="t" style="left:71px;top:76px;color:#8e8e8e">Повторить</div>
<div class="t" style="right:1095px;top:76px;color:#8e8e8e">Ctrl+Y</div>
<div class="t" style="left:71px;top:105px;color:#000">Внешний редактор</div>
<svg style="left:273px;top:107px" width="5" height="8" viewBox="0 0 5 8"><path d="M0 0 L4 4 L0 8Z" fill="#000"/></svg>
<div class="t" style="left:71px;top:134px;color:#f2f2f2">Выделение</div>
<svg style="left:273px;top:136px" width="5" height="8" viewBox="0 0 5 8"><path d="M0 0 L4 4 L0 8Z" fill="#fff"/></svg>
<div class="t" style="left:71px;top:156px;color:#000">Скопировать изображение</div>
<div class="t" style="right:1095px;top:156px;color:#000">Ctrl+C</div>
<div class="t" style="left:71px;top:178px;color:#8e8e8e">Вставить изображение</div>
<div class="t" style="right:1095px;top:178px;color:#8e8e8e">Ctrl+V</div>
<div class="t" style="left:71px;top:207px;color:#000">Повернуть</div>
<svg style="left:273px;top:209px" width="5" height="8" viewBox="0 0 5 8"><path d="M0 0 L4 4 L0 8Z" fill="#000"/></svg>
<div class="t" style="left:71px;top:229px;color:#000">Изменить размер</div>
<div class="t" style="right:1095px;top:229px;color:#000">Ctrl+R</div>
<div class="t" style="left:71px;top:251px;color:#000">Изменить размер холста</div>
<div class="t" style="right:1095px;top:251px;color:#000">Ctrl+K</div>
<div class="t" style="left:71px;top:273px;color:#000">Установить DPI</div>
<div class="t" style="left:71px;top:302px;color:#000">Обрезка</div>
<div class="t" style="right:1095px;top:302px;color:#000">X</div>
<div class="t" style="left:71px;top:324px;color:#000">Рисование</div>
<div class="t" style="right:1095px;top:324px;color:#000">D</div>
<div class="t" style="left:71px;top:346px;color:#000">Клонирование и ретушь</div>
<div class="t" style="right:1095px;top:346px;color:#000">O</div>
<div class="t" style="left:71px;top:368px;color:#000">Уменьшение эффекта красных глаз</div>
<div class="t" style="left:71px;top:397px;color:#000">Комментарий JPEG</div>
<div class="t" style="right:1095px;top:397px;color:#000">T</div>
<svg style="left:43px;top:103px" width="17" height="17" viewBox="0 0 17 17"><circle cx="7.5" cy="8" r="6.8" fill="#f8e898" stroke="#d8a848" stroke-width="1"/><rect x="3.5" y="5" width="2.2" height="2.2" fill="#2a2080"/><rect x="6.5" y="2.5" width="2.2" height="2.2" fill="#e03010"/><rect x="9.5" y="5" width="2.2" height="2.2" fill="#3a9a2a"/><rect x="5" y="8.5" width="2.2" height="2.2" fill="#d04080"/><path d="M9 10 L15.5 3" stroke="#2a2a90" stroke-width="1.6"/><path d="M6 13 H12 V11 L15.5 13.5 L12 16 V14.5 H6Z" fill="#20d020" stroke="#0a5a0a" stroke-width=".7"/></svg>
<svg style="left:44px;top:227px" width="19" height="19" viewBox="0 0 19 19">
<rect x="0.5" y="0.5" width="14" height="13" fill="#e0f6ff" stroke="#4a4a9a"/>
<path d="M7.5 2 L11.5 7 H9.5 L12 10 H3 L5.5 7 H3.5Z" fill="#128a12"/>
<rect x="9.5" y="9.5" width="9" height="9" fill="#e8fff0" stroke="#4a4a9a"/>
<path d="M14 11 L17 15 H15.8 L17.2 17 H10.8 L12.2 15 H11Z" fill="#128a12"/>
</svg>
<svg style="left:43px;top:300px" width="19" height="19" viewBox="0 0 19 19">
<rect x="0.5" y="0.5" width="16" height="14" fill="#d8f0ff" stroke="#6a6ab0"/>
<path d="M1 14 L6 7 L10 11 L13 6 L16 14Z" fill="#2a9a2a"/>
<path d="M4 2.5 V12 H14.5 M1.5 5 H12 V16.5" fill="none" stroke="#f0d000" stroke-width="2.2"/>
<path d="M4 2.5 V12 H14.5 M1.5 5 H12 V16.5" fill="none" stroke="#a08000" stroke-width=".5"/>
</svg>
<svg style="left:43px;top:322px" width="19" height="19" viewBox="0 0 19 19">
<rect x="7.5" y="4.5" width="11" height="10" fill="#e8f8ff" stroke="#7a7ac0"/>
<text x="8.6" y="13.2" font-family="Liberation Sans" font-weight="bold" font-style="italic" font-size="10" fill="#1a9a2a">B</text>
<text x="2.5" y="8" font-family="Liberation Sans" font-weight="bold" font-size="9" fill="#c89848">A</text>
<text x="-0.5" y="18.5" font-family="Liberation Sans" font-weight="bold" font-style="italic" font-size="12.5" fill="#1428e0">C</text>
</svg>
<svg style="left:43px;top:343px" width="19" height="19" viewBox="0 0 19 19">
<circle cx="9.5" cy="6" r="5" fill="#7ab870" stroke="#50a050" stroke-width=".6"/>
<circle cx="8" cy="4.5" r="2" fill="#c8f0c0"/>
<rect x="8.5" y="10.5" width="2" height="3" fill="#3a8a3a"/>
<ellipse cx="9.5" cy="15.5" rx="9" ry="2.4" fill="#f09030"/>
<ellipse cx="9.5" cy="14.5" rx="8.5" ry="1.8" fill="#3ab83a" stroke="#1a7a1a" stroke-width=".6"/>
</svg>
<svg style="left:44px;top:367px" width="16" height="14" viewBox="0 0 16 14"><ellipse cx="8" cy="7" rx="7.3" ry="5.5" fill="#fff" stroke="#6a6ac0" stroke-width="1.4"/><circle cx="8" cy="7" r="3.2" fill="#e01818"/><circle cx="7" cy="6" r="1" fill="#fff"/></svg>
<div class="a" style="left:280px;top:127px;width:381px;height:355px;background:#e6e6e6;border:1px solid #5a5a5a;box-shadow:inset 1px 1px 0 #fafafa"></div>
<div class="a" style="left:296px;top:220px;width:349px;height:1px;background:#9c9c94"></div>
<div class="a" style="left:296px;top:315px;width:349px;height:1px;background:#9c9c94"></div>
<div class="a" style="left:296px;top:432px;width:349px;height:1px;background:#9c9c94"></div>
<div class="t" style="left:312px;top:134px;color:#000">Обычный режим</div>
<div class="t" style="left:312px;top:156px;color:#000">Режим прямоугольного выделения</div>
<div class="t" style="left:312px;top:178px;color:#000">Режим округлого выделения</div>
<div class="t" style="left:312px;top:200px;color:#000">Режим произвольного выделения</div>
<div class="t" style="left:312px;top:229px;color:#8e8e8e">Выделить всё</div>
<div class="t" style="right:718px;top:229px;color:#8e8e8e">Ctrl+A</div>
<div class="t" style="left:312px;top:251px;color:#8e8e8e">Снять выделение</div>
<div class="t" style="right:718px;top:251px;color:#8e8e8e">Ctrl+D</div>
<div class="t" style="left:312px;top:273px;color:#8e8e8e">Инвертировать выделение</div>
<div class="t" style="right:718px;top:273px;color:#8e8e8e">Ctrl+Shift+I</div>
<div class="t" style="left:312px;top:295px;color:#8e8e8e">Увеличить выделение</div>
<div class="t" style="left:312px;top:324px;color:#8e8e8e">Скопировать</div>
<div class="t" style="right:718px;top:324px;color:#8e8e8e">Ctrl+C</div>
<div class="t" style="left:312px;top:346px;color:#8e8e8e">Вырезать</div>
<div class="t" style="right:718px;top:346px;color:#8e8e8e">Ctrl+X</div>
<div class="t" style="left:312px;top:368px;color:#8e8e8e">Вставить</div>
<div class="t" style="right:718px;top:368px;color:#8e8e8e">Ctrl+V</div>
<div class="t" style="left:312px;top:390px;color:#8e8e8e">Обрезать</div>
<div class="t" style="left:312px;top:412px;color:#8e8e8e">Удалить</div>
<div class="t" style="right:718px;top:412px;color:#8e8e8e">Del</div>
<div class="t" style="left:312px;top:441px;color:#8e8e8e">Сохранить выделение как...</div>
<div class="t" style="left:312px;top:463px;color:#8e8e8e">Сохранить выделение через JPEG-преобразование без потерь</div>
<svg style="left:290px;top:135px" width="9" height="8" viewBox="0 0 9 8"><path d="M0.8 4 L3.2 6.8 L8 1" fill="none" stroke="#000" stroke-width="1.6"/></svg>

</body></html>
